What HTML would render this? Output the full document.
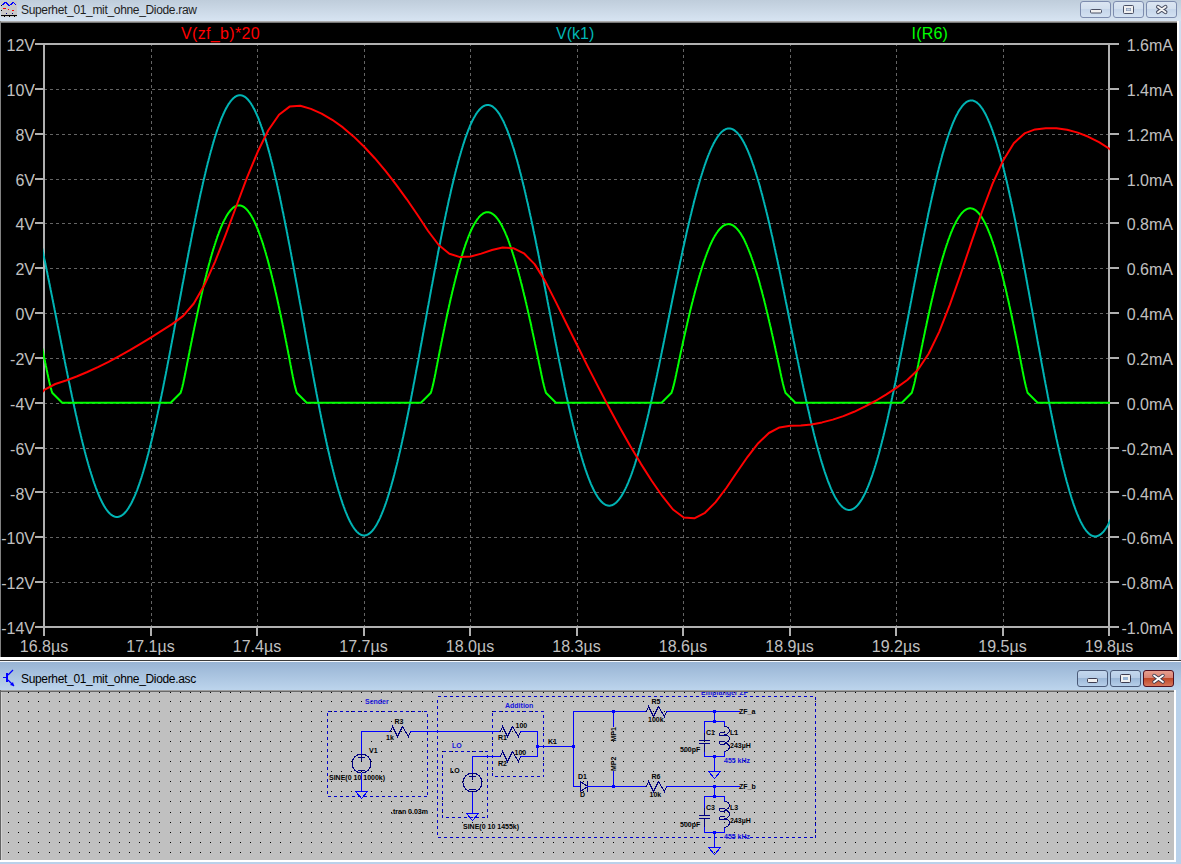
<!DOCTYPE html>
<html><head><meta charset="utf-8">
<style>
html,body{margin:0;padding:0;}
body{width:1181px;height:864px;overflow:hidden;position:relative;background:#b9d1ea;font-family:"Liberation Sans",sans-serif;}
.abs{position:absolute;}
#tb1{left:0;top:0;width:1181px;height:21px;background:linear-gradient(#bfcddb,#d7e4f2);}
#tb2{left:0;top:662px;width:1181px;height:28px;background:linear-gradient(#98b4d4,#bcd4ec);}
.ttl{position:absolute;font-size:12px;color:#000;white-space:nowrap;letter-spacing:-0.33px;}
svg{position:absolute;left:0;top:0;}
</style></head>
<body>
<div class="abs" id="tb1"></div>
<div class="ttl" style="left:21px;top:3px;color:#1e1e1e;">Superhet_01_mit_ohne_Diode.raw</div>
<div class="abs" id="tb2"></div>
<div class="ttl" style="left:21px;top:672px;">Superhet_01_mit_ohne_Diode.asc</div>

<svg width="1181" height="864" viewBox="0 0 1181 864">
<!-- plot window frame -->
<rect x="0" y="21" width="1181" height="640" fill="#d0def0"/>
<rect x="0" y="21" width="1177" height="1" fill="#acacac"/>
<rect x="0" y="22" width="1177" height="1" fill="#787878"/>
<rect x="0" y="21" width="1" height="636" fill="#828282"/>
<rect x="1177" y="21" width="2" height="639" fill="#ffffff"/>
<rect x="1" y="23" width="1176" height="634" fill="#000000"/>
<rect x="0" y="657" width="1179" height="3" fill="#ffffff"/>
<rect x="0" y="660" width="1181" height="1" fill="#3c3c3c"/>
<rect x="0" y="661" width="1181" height="1" fill="#f4f8fc"/>

<!-- plot -->
<g stroke="#646464" stroke-width="1" stroke-dasharray="3 3" shape-rendering="crispEdges">
<line x1="151.5" y1="43" x2="151.5" y2="626" />
<line x1="257.5" y1="43" x2="257.5" y2="626" />
<line x1="364.5" y1="43" x2="364.5" y2="626" />
<line x1="470.5" y1="43" x2="470.5" y2="626" />
<line x1="577.5" y1="43" x2="577.5" y2="626" />
<line x1="683.5" y1="43" x2="683.5" y2="626" />
<line x1="790.5" y1="43" x2="790.5" y2="626" />
<line x1="896.5" y1="43" x2="896.5" y2="626" />
<line x1="1003.5" y1="43" x2="1003.5" y2="626" />
<line x1="44" y1="89.5" x2="1108" y2="89.5" />
<line x1="44" y1="134.5" x2="1108" y2="134.5" />
<line x1="44" y1="179.5" x2="1108" y2="179.5" />
<line x1="44" y1="223.5" x2="1108" y2="223.5" />
<line x1="44" y1="268.5" x2="1108" y2="268.5" />
<line x1="44" y1="313.5" x2="1108" y2="313.5" />
<line x1="44" y1="358.5" x2="1108" y2="358.5" />
<line x1="44" y1="403.5" x2="1108" y2="403.5" />
<line x1="44" y1="448.5" x2="1108" y2="448.5" />
<line x1="44" y1="492.5" x2="1108" y2="492.5" />
<line x1="44" y1="537.5" x2="1108" y2="537.5" />
<line x1="44" y1="582.5" x2="1108" y2="582.5" />
</g>
<g fill="#b0b0b0" shape-rendering="crispEdges">
<rect x="43" y="43" width="1067" height="2"/>
<rect x="43" y="626" width="1067" height="2"/>
<rect x="43" y="43" width="2" height="585"/>
<rect x="1108" y="43" width="2" height="585"/>
<rect x="43" y="628" width="2" height="8"/>
<rect x="150" y="628" width="2" height="8"/>
<rect x="256" y="628" width="2" height="8"/>
<rect x="363" y="628" width="2" height="8"/>
<rect x="469" y="628" width="2" height="8"/>
<rect x="576" y="628" width="2" height="8"/>
<rect x="682" y="628" width="2" height="8"/>
<rect x="789" y="628" width="2" height="8"/>
<rect x="895" y="628" width="2" height="8"/>
<rect x="1002" y="628" width="2" height="8"/>
<rect x="1108" y="628" width="2" height="8"/>
<rect x="35" y="43" width="8" height="2"/>
<rect x="1110" y="43" width="9" height="2"/>
<rect x="35" y="88" width="8" height="2"/>
<rect x="1110" y="88" width="9" height="2"/>
<rect x="35" y="133" width="8" height="2"/>
<rect x="1110" y="133" width="9" height="2"/>
<rect x="35" y="178" width="8" height="2"/>
<rect x="1110" y="178" width="9" height="2"/>
<rect x="35" y="222" width="8" height="2"/>
<rect x="1110" y="222" width="9" height="2"/>
<rect x="35" y="267" width="8" height="2"/>
<rect x="1110" y="267" width="9" height="2"/>
<rect x="35" y="312" width="8" height="2"/>
<rect x="1110" y="312" width="9" height="2"/>
<rect x="35" y="357" width="8" height="2"/>
<rect x="1110" y="357" width="9" height="2"/>
<rect x="35" y="402" width="8" height="2"/>
<rect x="1110" y="402" width="9" height="2"/>
<rect x="35" y="447" width="8" height="2"/>
<rect x="1110" y="447" width="9" height="2"/>
<rect x="35" y="491" width="8" height="2"/>
<rect x="1110" y="491" width="9" height="2"/>
<rect x="35" y="536" width="8" height="2"/>
<rect x="1110" y="536" width="9" height="2"/>
<rect x="35" y="581" width="8" height="2"/>
<rect x="1110" y="581" width="9" height="2"/>
<rect x="35" y="626" width="8" height="2"/>
<rect x="1110" y="626" width="9" height="2"/>
</g>
<g fill="#c0c0c0" font-size="16px" font-family="Liberation Sans">
<text x="35" y="51.0" text-anchor="end">12V</text>
<text x="35" y="95.8" text-anchor="end">10V</text>
<text x="35" y="140.7" text-anchor="end">8V</text>
<text x="35" y="185.5" text-anchor="end">6V</text>
<text x="35" y="230.4" text-anchor="end">4V</text>
<text x="35" y="275.2" text-anchor="end">2V</text>
<text x="35" y="320.1" text-anchor="end">0V</text>
<text x="35" y="364.9" text-anchor="end">-2V</text>
<text x="35" y="409.8" text-anchor="end">-4V</text>
<text x="35" y="454.6" text-anchor="end">-6V</text>
<text x="35" y="499.5" text-anchor="end">-8V</text>
<text x="35" y="544.3" text-anchor="end">-10V</text>
<text x="35" y="589.2" text-anchor="end">-12V</text>
<text x="35" y="634.0" text-anchor="end">-14V</text>
<text x="1173" y="51.0" text-anchor="end">1.6mA</text>
<text x="1173" y="95.8" text-anchor="end">1.4mA</text>
<text x="1173" y="140.7" text-anchor="end">1.2mA</text>
<text x="1173" y="185.5" text-anchor="end">1.0mA</text>
<text x="1173" y="230.4" text-anchor="end">0.8mA</text>
<text x="1173" y="275.2" text-anchor="end">0.6mA</text>
<text x="1173" y="320.1" text-anchor="end">0.4mA</text>
<text x="1173" y="364.9" text-anchor="end">0.2mA</text>
<text x="1173" y="409.8" text-anchor="end">0.0mA</text>
<text x="1173" y="454.6" text-anchor="end">-0.2mA</text>
<text x="1173" y="499.5" text-anchor="end">-0.4mA</text>
<text x="1173" y="544.3" text-anchor="end">-0.6mA</text>
<text x="1173" y="589.2" text-anchor="end">-0.8mA</text>
<text x="1173" y="634.0" text-anchor="end">-1.0mA</text>
<text x="44.0" y="652" text-anchor="middle">16.8µs</text>
<text x="150.5" y="652" text-anchor="middle">17.1µs</text>
<text x="257.0" y="652" text-anchor="middle">17.4µs</text>
<text x="363.5" y="652" text-anchor="middle">17.7µs</text>
<text x="470.0" y="652" text-anchor="middle">18.0µs</text>
<text x="576.5" y="652" text-anchor="middle">18.3µs</text>
<text x="683.0" y="652" text-anchor="middle">18.6µs</text>
<text x="789.5" y="652" text-anchor="middle">18.9µs</text>
<text x="896.0" y="652" text-anchor="middle">19.2µs</text>
<text x="1002.5" y="652" text-anchor="middle">19.5µs</text>
<text x="1109.0" y="652" text-anchor="middle">19.8µs</text>
</g>
<g font-size="16px" font-family="Liberation Sans">
<text x="181" y="39" fill="#ff0000" letter-spacing="0.35">V(zf_b)*20</text>
<text x="556" y="39" fill="#00b4b4">V(k1)</text>
<text x="911.5" y="39" fill="#00ff00" letter-spacing="0.2">I(R6)</text>
</g>
<clipPath id="pc"><rect x="43" y="43" width="1067" height="585"/></clipPath>
<g fill="none" stroke-width="2" stroke-linejoin="round" clip-path="url(#pc)">
<polyline stroke="#00b4b4" points="26.9,184.5 27.3,185.8 27.7,187.1 28.0,188.4 28.4,189.7 28.7,191.1 29.1,192.4 29.4,193.7 29.8,195.1 30.1,196.5 30.5,197.9 30.9,199.3 31.2,200.7 31.6,202.1 31.9,203.5 32.3,204.9 32.6,206.4 33.0,207.8 33.3,209.3 33.7,210.8 34.0,212.3 34.4,213.7 34.8,215.2 35.1,216.8 35.5,218.3 35.8,219.8 36.2,221.3 36.5,222.9 36.9,224.4 37.2,226.0 37.6,227.6 38.0,229.1 38.3,230.7 38.7,232.3 39.0,233.9 39.4,235.5 39.7,237.1 40.1,238.8 40.4,240.4 40.8,242.0 41.1,243.7 41.5,245.3 41.9,247.0 42.2,248.6 42.6,250.3 42.9,252.0 43.3,253.7 43.6,255.3 44.0,257.0 44.3,258.7 44.7,260.4 45.1,262.1 45.4,263.8 45.8,265.6 46.1,267.3 46.5,269.0 46.8,270.7 47.2,272.5 47.5,274.2 47.9,276.0 48.2,277.7 48.6,279.5 49.0,281.2 49.3,283.0 49.7,284.7 50.0,286.5 50.4,288.3 50.7,290.0 51.1,291.8 51.4,293.6 51.8,295.4 52.2,297.2 52.5,299.0 52.9,300.8 53.2,302.5 53.6,304.3 53.9,306.1 54.3,307.9 54.6,309.7 55.0,311.5 55.3,313.3 55.7,315.1 56.1,317.0 56.4,318.8 56.8,320.6 57.1,322.4 57.5,324.2 57.8,326.0 58.2,327.8 58.5,329.6 58.9,331.4 59.3,333.2 59.6,335.0 60.0,336.8 60.3,338.6 60.7,340.4 61.0,342.2 61.4,344.0 61.7,345.8 62.1,347.6 62.4,349.4 62.8,351.2 63.2,353.0 63.5,354.8 63.9,356.6 64.2,358.4 64.6,360.1 64.9,361.9 65.3,363.7 65.6,365.5 66.0,367.2 66.4,369.0 66.7,370.7 67.1,372.5 67.4,374.2 67.8,376.0 68.1,377.7 68.5,379.4 68.8,381.2 69.2,382.9 69.6,384.6 69.9,386.3 70.3,388.0 70.6,389.7 71.0,391.4 71.3,393.1 71.7,394.8 72.0,396.5 72.4,398.1 72.7,399.8 73.1,401.5 73.5,403.1 73.8,404.8 74.2,406.4 74.5,408.0 74.9,409.6 75.2,411.3 75.6,412.9 75.9,414.5 76.3,416.1 76.7,417.6 77.0,419.2 77.4,420.8 77.7,422.3 78.1,423.9 78.4,425.4 78.8,427.0 79.1,428.5 79.5,430.0 79.8,431.5 80.2,433.0 80.6,434.5 80.9,436.0 81.3,437.4 81.6,438.9 82.0,440.3 82.3,441.8 82.7,443.2 83.0,444.6 83.4,446.0 83.8,447.4 84.1,448.8 84.5,450.1 84.8,451.5 85.2,452.9 85.5,454.2 85.9,455.5 86.2,456.8 86.6,458.1 86.9,459.4 87.3,460.7 87.7,462.0 88.0,463.2 88.4,464.5 88.7,465.7 89.1,466.9 89.4,468.1 89.8,469.3 90.1,470.5 90.5,471.7 90.9,472.8 91.2,474.0 91.6,475.1 91.9,476.2 92.3,477.3 92.6,478.4 93.0,479.5 93.3,480.6 93.7,481.6 94.0,482.6 94.4,483.7 94.8,484.7 95.1,485.7 95.5,486.7 95.8,487.6 96.2,488.6 96.5,489.5 96.9,490.4 97.2,491.3 97.6,492.2 98.0,493.1 98.3,494.0 98.7,494.8 99.0,495.7 99.4,496.5 99.7,497.3 100.1,498.1 100.4,498.8 100.8,499.6 101.1,500.3 101.5,501.1 101.9,501.8 102.2,502.5 102.6,503.1 102.9,503.8 103.3,504.5 103.6,505.1 104.0,505.7 104.3,506.3 104.7,506.9 105.1,507.5 105.4,508.0 105.8,508.6 106.1,509.1 106.5,509.6 106.8,510.1 107.2,510.5 107.5,511.0 107.9,511.4 108.2,511.9 108.6,512.3 109.0,512.7 109.3,513.0 109.7,513.4 110.0,513.7 110.4,514.0 110.7,514.4 111.1,514.6 111.4,514.9 111.8,515.2 112.2,515.4 112.5,515.6 112.9,515.8 113.2,516.0 113.6,516.2 113.9,516.4 114.3,516.5 114.6,516.6 115.0,516.7 115.3,516.8 115.7,516.9 116.1,516.9 116.4,517.0 116.8,517.0 117.1,517.0 117.5,517.0 117.8,516.9 118.2,516.9 118.5,516.8 118.9,516.7 119.3,516.6 119.6,516.5 120.0,516.4 120.3,516.2 120.7,516.1 121.0,515.9 121.4,515.7 121.7,515.4 122.1,515.2 122.4,515.0 122.8,514.7 123.2,514.4 123.5,514.1 123.9,513.8 124.2,513.4 124.6,513.1 124.9,512.7 125.3,512.3 125.6,511.9 126.0,511.5 126.4,511.0 126.7,510.6 127.1,510.1 127.4,509.6 127.8,509.1 128.1,508.6 128.5,508.1 128.8,507.5 129.2,506.9 129.5,506.3 129.9,505.7 130.3,505.1 130.6,504.5 131.0,503.8 131.3,503.2 131.7,502.5 132.0,501.8 132.4,501.0 132.7,500.3 133.1,499.6 133.4,498.8 133.8,498.0 134.2,497.2 134.5,496.4 134.9,495.6 135.2,494.7 135.6,493.9 135.9,493.0 136.3,492.1 136.6,491.2 137.0,490.3 137.4,489.3 137.7,488.4 138.1,487.4 138.4,486.4 138.8,485.5 139.1,484.4 139.5,483.4 139.8,482.4 140.2,481.3 140.5,480.3 140.9,479.2 141.3,478.1 141.6,477.0 142.0,475.8 142.3,474.7 142.7,473.5 143.0,472.4 143.4,471.2 143.7,470.0 144.1,468.8 144.5,467.6 144.8,466.3 145.2,465.1 145.5,463.8 145.9,462.6 146.2,461.3 146.6,460.0 146.9,458.7 147.3,457.3 147.6,456.0 148.0,454.7 148.4,453.3 148.7,451.9 149.1,450.5 149.4,449.1 149.8,447.7 150.1,446.3 150.5,444.9 150.8,443.4 151.2,442.0 151.6,440.5 151.9,439.0 152.3,437.5 152.6,436.0 153.0,434.5 153.3,433.0 153.7,431.5 154.0,429.9 154.4,428.4 154.7,426.8 155.1,425.2 155.5,423.7 155.8,422.1 156.2,420.5 156.5,418.8 156.9,417.2 157.2,415.6 157.6,414.0 157.9,412.3 158.3,410.6 158.7,409.0 159.0,407.3 159.4,405.6 159.7,403.9 160.1,402.2 160.4,400.5 160.8,398.8 161.1,397.1 161.5,395.4 161.8,393.6 162.2,391.9 162.6,390.1 162.9,388.4 163.3,386.6 163.6,384.8 164.0,383.0 164.3,381.2 164.7,379.5 165.0,377.7 165.4,375.9 165.8,374.0 166.1,372.2 166.5,370.4 166.8,368.6 167.2,366.7 167.5,364.9 167.9,363.1 168.2,361.2 168.6,359.4 168.9,357.5 169.3,355.6 169.7,353.8 170.0,351.9 170.4,350.0 170.7,348.1 171.1,346.3 171.4,344.4 171.8,342.5 172.1,340.6 172.5,338.7 172.9,336.8 173.2,334.9 173.6,333.0 173.9,331.1 174.3,329.2 174.6,327.3 175.0,325.4 175.3,323.5 175.7,321.6 176.1,319.6 176.4,317.7 176.8,315.8 177.1,313.9 177.5,312.0 177.8,310.1 178.2,308.2 178.5,306.2 178.9,304.3 179.2,302.4 179.6,300.5 180.0,298.6 180.3,296.7 180.7,294.8 181.0,292.9 181.4,291.0 181.7,289.0 182.1,287.1 182.4,285.2 182.8,283.3 183.2,281.4 183.5,279.6 183.9,277.7 184.2,275.8 184.6,273.9 184.9,272.0 185.3,270.1 185.6,268.2 186.0,266.4 186.3,264.5 186.7,262.6 187.1,260.8 187.4,258.9 187.8,257.0 188.1,255.2 188.5,253.3 188.8,251.5 189.2,249.7 189.5,247.8 189.9,246.0 190.3,244.2 190.6,242.3 191.0,240.5 191.3,238.7 191.7,236.9 192.0,235.1 192.4,233.3 192.7,231.5 193.1,229.7 193.4,228.0 193.8,226.2 194.2,224.4 194.5,222.7 194.9,220.9 195.2,219.2 195.6,217.4 195.9,215.7 196.3,214.0 196.6,212.3 197.0,210.6 197.4,208.9 197.7,207.2 198.1,205.5 198.4,203.8 198.8,202.1 199.1,200.5 199.5,198.8 199.8,197.2 200.2,195.6 200.5,193.9 200.9,192.3 201.3,190.7 201.6,189.1 202.0,187.5 202.3,186.0 202.7,184.4 203.0,182.8 203.4,181.3 203.7,179.7 204.1,178.2 204.5,176.7 204.8,175.2 205.2,173.7 205.5,172.2 205.9,170.8 206.2,169.3 206.6,167.8 206.9,166.4 207.3,165.0 207.6,163.6 208.0,162.1 208.4,160.8 208.7,159.4 209.1,158.0 209.4,156.7 209.8,155.3 210.1,154.0 210.5,152.7 210.8,151.3 211.2,150.1 211.6,148.8 211.9,147.5 212.3,146.2 212.6,145.0 213.0,143.8 213.3,142.6 213.7,141.4 214.0,140.2 214.4,139.0 214.7,137.8 215.1,136.7 215.5,135.5 215.8,134.4 216.2,133.3 216.5,132.2 216.9,131.2 217.2,130.1 217.6,129.0 217.9,128.0 218.3,127.0 218.7,126.0 219.0,125.0 219.4,124.0 219.7,123.1 220.1,122.1 220.4,121.2 220.8,120.3 221.1,119.4 221.5,118.5 221.8,117.6 222.2,116.8 222.6,115.9 222.9,115.1 223.3,114.3 223.6,113.5 224.0,112.7 224.3,112.0 224.7,111.2 225.0,110.5 225.4,109.8 225.8,109.1 226.1,108.4 226.5,107.8 226.8,107.1 227.2,106.5 227.5,105.9 227.9,105.3 228.2,104.7 228.6,104.2 228.9,103.6 229.3,103.1 229.7,102.6 230.0,102.1 230.4,101.6 230.7,101.1 231.1,100.7 231.4,100.3 231.8,99.9 232.1,99.5 232.5,99.1 232.9,98.7 233.2,98.4 233.6,98.1 233.9,97.8 234.3,97.5 234.6,97.2 235.0,97.0 235.3,96.7 235.7,96.5 236.0,96.3 236.4,96.1 236.8,95.9 237.1,95.8 237.5,95.7 237.8,95.5 238.2,95.4 238.5,95.4 238.9,95.3 239.2,95.3 239.6,95.2 240.0,95.2 240.3,95.2 240.7,95.3 241.0,95.3 241.4,95.4 241.7,95.4 242.1,95.5 242.4,95.6 242.8,95.8 243.1,95.9 243.5,96.1 243.9,96.3 244.2,96.5 244.6,96.7 244.9,96.9 245.3,97.2 245.6,97.4 246.0,97.7 246.3,98.0 246.7,98.4 247.1,98.7 247.4,99.1 247.8,99.4 248.1,99.8 248.5,100.2 248.8,100.7 249.2,101.1 249.5,101.6 249.9,102.0 250.2,102.5 250.6,103.0 251.0,103.6 251.3,104.1 251.7,104.7 252.0,105.2 252.4,105.8 252.7,106.5 253.1,107.1 253.4,107.7 253.8,108.4 254.1,109.1 254.5,109.8 254.9,110.5 255.2,111.2 255.6,112.0 255.9,112.7 256.3,113.5 256.6,114.3 257.0,115.1 257.3,115.9 257.7,116.8 258.1,117.6 258.4,118.5 258.8,119.4 259.1,120.3 259.5,121.2 259.8,122.1 260.2,123.1 260.5,124.1 260.9,125.0 261.2,126.0 261.6,127.1 262.0,128.1 262.3,129.1 262.7,130.2 263.0,131.3 263.4,132.3 263.7,133.4 264.1,134.6 264.4,135.7 264.8,136.8 265.2,138.0 265.5,139.2 265.9,140.4 266.2,141.6 266.6,142.8 266.9,144.0 267.3,145.2 267.6,146.5 268.0,147.8 268.3,149.1 268.7,150.4 269.1,151.7 269.4,153.0 269.8,154.3 270.1,155.7 270.5,157.0 270.8,158.4 271.2,159.8 271.5,161.2 271.9,162.6 272.3,164.0 272.6,165.5 273.0,166.9 273.3,168.4 273.7,169.9 274.0,171.4 274.4,172.8 274.7,174.4 275.1,175.9 275.4,177.4 275.8,178.9 276.2,180.5 276.5,182.1 276.9,183.6 277.2,185.2 277.6,186.8 277.9,188.4 278.3,190.0 278.6,191.7 279.0,193.3 279.4,194.9 279.7,196.6 280.1,198.3 280.4,199.9 280.8,201.6 281.1,203.3 281.5,205.0 281.8,206.7 282.2,208.4 282.5,210.2 282.9,211.9 283.3,213.6 283.6,215.4 284.0,217.2 284.3,218.9 284.7,220.7 285.0,222.5 285.4,224.3 285.7,226.1 286.1,227.9 286.5,229.7 286.8,231.5 287.2,233.3 287.5,235.2 287.9,237.0 288.2,238.9 288.6,240.7 288.9,242.6 289.3,244.4 289.7,246.3 290.0,248.2 290.4,250.1 290.7,251.9 291.1,253.8 291.4,255.7 291.8,257.6 292.1,259.5 292.5,261.4 292.8,263.3 293.2,265.3 293.6,267.2 293.9,269.1 294.3,271.0 294.6,273.0 295.0,274.9 295.3,276.9 295.7,278.8 296.0,280.8 296.4,282.7 296.8,284.7 297.1,286.6 297.5,288.6 297.8,290.6 298.2,292.5 298.5,294.5 298.9,296.5 299.2,298.4 299.6,300.4 299.9,302.4 300.3,304.4 300.7,306.4 301.0,308.3 301.4,310.3 301.7,312.3 302.1,314.3 302.4,316.3 302.8,318.3 303.1,320.3 303.5,322.2 303.9,324.2 304.2,326.2 304.6,328.2 304.9,330.2 305.3,332.2 305.6,334.1 306.0,336.1 306.3,338.1 306.7,340.1 307.0,342.0 307.4,344.0 307.8,346.0 308.1,347.9 308.5,349.9 308.8,351.9 309.2,353.8 309.5,355.8 309.9,357.7 310.2,359.7 310.6,361.6 310.9,363.6 311.3,365.5 311.7,367.4 312.0,369.4 312.4,371.3 312.7,373.2 313.1,375.1 313.4,377.0 313.8,378.9 314.1,380.8 314.5,382.7 314.9,384.6 315.2,386.5 315.6,388.4 315.9,390.2 316.3,392.1 316.6,394.0 317.0,395.8 317.3,397.6 317.7,399.5 318.0,401.3 318.4,403.1 318.8,405.0 319.1,406.8 319.5,408.6 319.8,410.4 320.2,412.2 320.5,413.9 320.9,415.7 321.2,417.5 321.6,419.2 322.0,421.0 322.3,422.7 322.7,424.4 323.0,426.1 323.4,427.9 323.7,429.6 324.1,431.2 324.4,432.9 324.8,434.6 325.2,436.3 325.5,437.9 325.9,439.6 326.2,441.2 326.6,442.8 326.9,444.4 327.3,446.0 327.6,447.6 328.0,449.2 328.3,450.8 328.7,452.3 329.1,453.9 329.4,455.4 329.8,456.9 330.1,458.5 330.5,460.0 330.8,461.4 331.2,462.9 331.5,464.4 331.9,465.8 332.3,467.3 332.6,468.7 333.0,470.1 333.3,471.5 333.7,472.9 334.0,474.3 334.4,475.7 334.7,477.0 335.1,478.4 335.4,479.7 335.8,481.0 336.2,482.3 336.5,483.6 336.9,484.9 337.2,486.1 337.6,487.4 337.9,488.6 338.3,489.8 338.6,491.0 339.0,492.2 339.4,493.4 339.7,494.5 340.1,495.7 340.4,496.8 340.8,497.9 341.1,499.0 341.5,500.1 341.8,501.2 342.2,502.2 342.5,503.3 342.9,504.3 343.3,505.3 343.6,506.3 344.0,507.3 344.3,508.2 344.7,509.2 345.0,510.1 345.4,511.0 345.7,511.9 346.1,512.8 346.5,513.7 346.8,514.5 347.2,515.4 347.5,516.2 347.9,517.0 348.2,517.8 348.6,518.6 348.9,519.3 349.3,520.0 349.6,520.8 350.0,521.5 350.4,522.2 350.7,522.8 351.1,523.5 351.4,524.1 351.8,524.7 352.1,525.3 352.5,525.9 352.8,526.5 353.2,527.0 353.6,527.6 353.9,528.1 354.3,528.6 354.6,529.1 355.0,529.5 355.3,530.0 355.7,530.4 356.0,530.8 356.4,531.2 356.7,531.6 357.1,532.0 357.5,532.3 357.8,532.6 358.2,532.9 358.5,533.2 358.9,533.5 359.2,533.8 359.6,534.0 359.9,534.2 360.3,534.4 360.7,534.6 361.0,534.8 361.4,534.9 361.7,535.1 362.1,535.2 362.4,535.3 362.8,535.3 363.1,535.4 363.5,535.4 363.8,535.5 364.2,535.5 364.6,535.5 364.9,535.4 365.3,535.4 365.6,535.3 366.0,535.2 366.3,535.1 366.7,535.0 367.0,534.9 367.4,534.7 367.8,534.6 368.1,534.4 368.5,534.2 368.8,533.9 369.2,533.7 369.5,533.4 369.9,533.2 370.2,532.9 370.6,532.5 370.9,532.2 371.3,531.9 371.7,531.5 372.0,531.1 372.4,530.7 372.7,530.3 373.1,529.9 373.4,529.4 373.8,528.9 374.1,528.5 374.5,528.0 374.8,527.4 375.2,526.9 375.6,526.3 375.9,525.8 376.3,525.2 376.6,524.6 377.0,523.9 377.3,523.3 377.7,522.7 378.0,522.0 378.4,521.3 378.8,520.6 379.1,519.9 379.5,519.1 379.8,518.4 380.2,517.6 380.5,516.8 380.9,516.0 381.2,515.2 381.6,514.3 381.9,513.5 382.3,512.6 382.7,511.7 383.0,510.8 383.4,509.9 383.7,509.0 384.1,508.0 384.4,507.1 384.8,506.1 385.1,505.1 385.5,504.1 385.9,503.1 386.2,502.0 386.6,501.0 386.9,499.9 387.3,498.8 387.6,497.7 388.0,496.6 388.3,495.5 388.7,494.4 389.0,493.2 389.4,492.0 389.8,490.8 390.1,489.6 390.5,488.4 390.8,487.2 391.2,486.0 391.5,484.7 391.9,483.4 392.2,482.2 392.6,480.9 393.0,479.6 393.3,478.2 393.7,476.9 394.0,475.6 394.4,474.2 394.7,472.8 395.1,471.4 395.4,470.0 395.8,468.6 396.1,467.2 396.5,465.8 396.9,464.3 397.2,462.9 397.6,461.4 397.9,459.9 398.3,458.4 398.6,456.9 399.0,455.4 399.3,453.9 399.7,452.4 400.1,450.8 400.4,449.3 400.8,447.7 401.1,446.1 401.5,444.5 401.8,442.9 402.2,441.3 402.5,439.7 402.9,438.1 403.3,436.4 403.6,434.8 404.0,433.1 404.3,431.4 404.7,429.8 405.0,428.1 405.4,426.4 405.7,424.7 406.1,423.0 406.4,421.3 406.8,419.5 407.2,417.8 407.5,416.0 407.9,414.3 408.2,412.5 408.6,410.8 408.9,409.0 409.3,407.2 409.6,405.4 410.0,403.6 410.4,401.8 410.7,400.0 411.1,398.2 411.4,396.4 411.8,394.5 412.1,392.7 412.5,390.9 412.8,389.0 413.2,387.2 413.5,385.3 413.9,383.4 414.3,381.6 414.6,379.7 415.0,377.8 415.3,375.9 415.7,374.0 416.0,372.2 416.4,370.3 416.7,368.4 417.1,366.5 417.5,364.5 417.8,362.6 418.2,360.7 418.5,358.8 418.9,356.9 419.2,354.9 419.6,353.0 419.9,351.1 420.3,349.2 420.6,347.2 421.0,345.3 421.4,343.3 421.7,341.4 422.1,339.5 422.4,337.5 422.8,335.6 423.1,333.6 423.5,331.7 423.8,329.7 424.2,327.8 424.6,325.8 424.9,323.9 425.3,321.9 425.6,320.0 426.0,318.0 426.3,316.1 426.7,314.1 427.0,312.2 427.4,310.2 427.7,308.3 428.1,306.3 428.5,304.4 428.8,302.5 429.2,300.5 429.5,298.6 429.9,296.6 430.2,294.7 430.6,292.8 430.9,290.9 431.3,288.9 431.6,287.0 432.0,285.1 432.4,283.2 432.7,281.3 433.1,279.4 433.4,277.5 433.8,275.6 434.1,273.7 434.5,271.8 434.8,269.9 435.2,268.0 435.6,266.2 435.9,264.3 436.3,262.4 436.6,260.6 437.0,258.7 437.3,256.9 437.7,255.0 438.0,253.2 438.4,251.3 438.7,249.5 439.1,247.7 439.5,245.9 439.8,244.0 440.2,242.2 440.5,240.4 440.9,238.6 441.2,236.9 441.6,235.1 441.9,233.3 442.3,231.5 442.7,229.8 443.0,228.0 443.4,226.3 443.7,224.5 444.1,222.8 444.4,221.1 444.8,219.4 445.1,217.7 445.5,216.0 445.8,214.3 446.2,212.6 446.6,211.0 446.9,209.3 447.3,207.6 447.6,206.0 448.0,204.4 448.3,202.7 448.7,201.1 449.0,199.5 449.4,197.9 449.8,196.3 450.1,194.8 450.5,193.2 450.8,191.6 451.2,190.1 451.5,188.6 451.9,187.0 452.2,185.5 452.6,184.0 453.0,182.5 453.3,181.0 453.7,179.6 454.0,178.1 454.4,176.7 454.7,175.2 455.1,173.8 455.4,172.4 455.8,171.0 456.1,169.6 456.5,168.3 456.9,166.9 457.2,165.5 457.6,164.2 457.9,162.9 458.3,161.6 458.6,160.3 459.0,159.0 459.3,157.7 459.7,156.4 460.1,155.2 460.4,154.0 460.8,152.7 461.1,151.5 461.5,150.3 461.8,149.2 462.2,148.0 462.5,146.9 462.9,145.7 463.2,144.6 463.6,143.5 464.0,142.4 464.3,141.3 464.7,140.2 465.0,139.2 465.4,138.2 465.7,137.1 466.1,136.1 466.4,135.1 466.8,134.2 467.2,133.2 467.5,132.2 467.9,131.3 468.2,130.4 468.6,129.5 468.9,128.6 469.3,127.7 469.6,126.9 470.0,126.0 470.3,125.2 470.7,124.4 471.1,123.6 471.4,122.8 471.8,122.1 472.1,121.3 472.5,120.6 472.8,119.9 473.2,119.2 473.5,118.5 473.9,117.8 474.3,117.2 474.6,116.6 475.0,116.0 475.3,115.4 475.7,114.8 476.0,114.2 476.4,113.7 476.7,113.1 477.1,112.6 477.4,112.1 477.8,111.6 478.2,111.2 478.5,110.7 478.9,110.3 479.2,109.9 479.6,109.5 479.9,109.1 480.3,108.7 480.6,108.4 481.0,108.0 481.4,107.7 481.7,107.4 482.1,107.1 482.4,106.9 482.8,106.6 483.1,106.4 483.5,106.2 483.8,106.0 484.2,105.8 484.5,105.6 484.9,105.5 485.3,105.4 485.6,105.3 486.0,105.2 486.3,105.1 486.7,105.0 487.0,105.0 487.4,105.0 487.7,105.0 488.1,105.0 488.5,105.0 488.8,105.0 489.2,105.1 489.5,105.2 489.9,105.3 490.2,105.4 490.6,105.5 490.9,105.7 491.3,105.8 491.6,106.0 492.0,106.2 492.4,106.4 492.7,106.7 493.1,106.9 493.4,107.2 493.8,107.5 494.1,107.8 494.5,108.1 494.8,108.4 495.2,108.8 495.5,109.1 495.9,109.5 496.3,109.9 496.6,110.3 497.0,110.8 497.3,111.2 497.7,111.7 498.0,112.2 498.4,112.7 498.7,113.2 499.1,113.7 499.5,114.2 499.8,114.8 500.2,115.4 500.5,116.0 500.9,116.6 501.2,117.2 501.6,117.9 501.9,118.5 502.3,119.2 502.6,119.9 503.0,120.6 503.4,121.3 503.7,122.1 504.1,122.8 504.4,123.6 504.8,124.4 505.1,125.2 505.5,126.0 505.8,126.8 506.2,127.7 506.6,128.5 506.9,129.4 507.3,130.3 507.6,131.2 508.0,132.1 508.3,133.1 508.7,134.0 509.0,135.0 509.4,135.9 509.7,136.9 510.1,137.9 510.5,139.0 510.8,140.0 511.2,141.1 511.5,142.1 511.9,143.2 512.2,144.3 512.6,145.4 512.9,146.5 513.3,147.6 513.7,148.8 514.0,149.9 514.4,151.1 514.7,152.3 515.1,153.5 515.4,154.7 515.8,155.9 516.1,157.1 516.5,158.4 516.9,159.6 517.2,160.9 517.6,162.2 517.9,163.5 518.3,164.8 518.6,166.1 519.0,167.4 519.3,168.8 519.7,170.1 520.0,171.5 520.4,172.9 520.8,174.3 521.1,175.7 521.5,177.1 521.8,178.5 522.2,179.9 522.5,181.4 522.9,182.8 523.2,184.3 523.6,185.7 524.0,187.2 524.3,188.7 524.7,190.2 525.0,191.7 525.4,193.2 525.7,194.8 526.1,196.3 526.4,197.9 526.8,199.4 527.1,201.0 527.5,202.5 527.9,204.1 528.2,205.7 528.6,207.3 528.9,208.9 529.3,210.5 529.6,212.2 530.0,213.8 530.3,215.4 530.7,217.1 531.1,218.7 531.4,220.4 531.8,222.1 532.1,223.7 532.5,225.4 532.8,227.1 533.2,228.8 533.5,230.5 533.9,232.2 534.2,233.9 534.6,235.6 535.0,237.3 535.3,239.1 535.7,240.8 536.0,242.5 536.4,244.3 536.7,246.0 537.1,247.8 537.4,249.6 537.8,251.3 538.2,253.1 538.5,254.9 538.9,256.6 539.2,258.4 539.6,260.2 539.9,262.0 540.3,263.8 540.6,265.6 541.0,267.4 541.3,269.2 541.7,271.0 542.1,272.8 542.4,274.6 542.8,276.4 543.1,278.2 543.5,280.1 543.8,281.9 544.2,283.7 544.5,285.5 544.9,287.3 545.3,289.2 545.6,291.0 546.0,292.8 546.3,294.7 546.7,296.5 547.0,298.4 547.4,300.2 547.7,302.0 548.1,303.9 548.4,305.7 548.8,307.5 549.2,309.4 549.5,311.2 549.9,313.1 550.2,314.9 550.6,316.7 550.9,318.6 551.3,320.4 551.6,322.3 552.0,324.1 552.3,325.9 552.7,327.8 553.1,329.6 553.4,331.4 553.8,333.3 554.1,335.1 554.5,336.9 554.8,338.7 555.2,340.5 555.5,342.3 555.9,344.2 556.3,346.0 556.6,347.8 557.0,349.6 557.3,351.4 557.7,353.2 558.0,354.9 558.4,356.7 558.7,358.5 559.1,360.3 559.4,362.0 559.8,363.8 560.2,365.6 560.5,367.3 560.9,369.1 561.2,370.8 561.6,372.5 561.9,374.3 562.3,376.0 562.6,377.7 563.0,379.4 563.4,381.1 563.7,382.8 564.1,384.5 564.4,386.2 564.8,387.9 565.1,389.6 565.5,391.2 565.8,392.9 566.2,394.6 566.5,396.2 566.9,397.8 567.3,399.5 567.6,401.1 568.0,402.7 568.3,404.3 568.7,405.9 569.0,407.5 569.4,409.0 569.7,410.6 570.1,412.2 570.5,413.7 570.8,415.3 571.2,416.8 571.5,418.3 571.9,419.8 572.2,421.3 572.6,422.8 572.9,424.3 573.3,425.8 573.7,427.3 574.0,428.7 574.4,430.1 574.7,431.6 575.1,433.0 575.4,434.4 575.8,435.8 576.1,437.2 576.5,438.6 576.8,439.9 577.2,441.3 577.6,442.6 577.9,444.0 578.3,445.3 578.6,446.6 579.0,447.9 579.3,449.2 579.7,450.4 580.0,451.7 580.4,452.9 580.8,454.2 581.1,455.4 581.5,456.6 581.8,457.8 582.2,459.0 582.5,460.2 582.9,461.3 583.2,462.5 583.6,463.6 583.9,464.7 584.3,465.8 584.7,466.9 585.0,468.0 585.4,469.1 585.7,470.1 586.1,471.1 586.4,472.2 586.8,473.2 587.1,474.2 587.5,475.1 587.9,476.1 588.2,477.1 588.6,478.0 588.9,478.9 589.3,479.8 589.6,480.7 590.0,481.6 590.3,482.5 590.7,483.3 591.0,484.1 591.4,485.0 591.8,485.8 592.1,486.6 592.5,487.3 592.8,488.1 593.2,488.8 593.5,489.6 593.9,490.3 594.2,491.0 594.6,491.6 595.0,492.3 595.3,493.0 595.7,493.6 596.0,494.2 596.4,494.8 596.7,495.4 597.1,496.0 597.4,496.5 597.8,497.1 598.1,497.6 598.5,498.1 598.9,498.6 599.2,499.1 599.6,499.5 599.9,500.0 600.3,500.4 600.6,500.8 601.0,501.2 601.3,501.6 601.7,501.9 602.1,502.3 602.4,502.6 602.8,502.9 603.1,503.2 603.5,503.5 603.8,503.7 604.2,504.0 604.5,504.2 604.9,504.4 605.2,504.6 605.6,504.8 606.0,505.0 606.3,505.1 606.7,505.2 607.0,505.4 607.4,505.5 607.7,505.5 608.1,505.6 608.4,505.6 608.8,505.7 609.1,505.7 609.5,505.7 609.9,505.7 610.2,505.6 610.6,505.6 610.9,505.5 611.3,505.4 611.6,505.3 612.0,505.2 612.3,505.1 612.7,504.9 613.1,504.7 613.4,504.5 613.8,504.3 614.1,504.1 614.5,503.9 614.8,503.6 615.2,503.4 615.5,503.1 615.9,502.8 616.2,502.5 616.6,502.1 617.0,501.8 617.3,501.4 617.7,501.0 618.0,500.6 618.4,500.2 618.7,499.8 619.1,499.3 619.4,498.9 619.8,498.4 620.2,497.9 620.5,497.4 620.9,496.9 621.2,496.3 621.6,495.8 621.9,495.2 622.3,494.6 622.6,494.0 623.0,493.4 623.3,492.8 623.7,492.1 624.1,491.4 624.4,490.8 624.8,490.1 625.1,489.4 625.5,488.6 625.8,487.9 626.2,487.1 626.5,486.4 626.9,485.6 627.3,484.8 627.6,484.0 628.0,483.1 628.3,482.3 628.7,481.4 629.0,480.6 629.4,479.7 629.7,478.8 630.1,477.9 630.5,476.9 630.8,476.0 631.2,475.0 631.5,474.1 631.9,473.1 632.2,472.1 632.6,471.1 632.9,470.0 633.3,469.0 633.6,467.9 634.0,466.9 634.4,465.8 634.7,464.7 635.1,463.6 635.4,462.5 635.8,461.4 636.1,460.2 636.5,459.1 636.8,457.9 637.2,456.7 637.6,455.5 637.9,454.3 638.3,453.1 638.6,451.9 639.0,450.6 639.3,449.4 639.7,448.1 640.0,446.9 640.4,445.6 640.7,444.3 641.1,443.0 641.5,441.7 641.8,440.3 642.2,439.0 642.5,437.6 642.9,436.3 643.2,434.9 643.6,433.5 643.9,432.1 644.3,430.7 644.7,429.3 645.0,427.9 645.4,426.5 645.7,425.0 646.1,423.6 646.4,422.1 646.8,420.7 647.1,419.2 647.5,417.7 647.8,416.2 648.2,414.7 648.6,413.2 648.9,411.7 649.3,410.1 649.6,408.6 650.0,407.1 650.3,405.5 650.7,403.9 651.0,402.4 651.4,400.8 651.8,399.2 652.1,397.6 652.5,396.0 652.8,394.4 653.2,392.8 653.5,391.2 653.9,389.6 654.2,387.9 654.6,386.3 654.9,384.7 655.3,383.0 655.7,381.4 656.0,379.7 656.4,378.0 656.7,376.4 657.1,374.7 657.4,373.0 657.8,371.3 658.1,369.7 658.5,368.0 658.9,366.3 659.2,364.6 659.6,362.8 659.9,361.1 660.3,359.4 660.6,357.7 661.0,356.0 661.3,354.3 661.7,352.5 662.0,350.8 662.4,349.1 662.8,347.3 663.1,345.6 663.5,343.8 663.8,342.1 664.2,340.4 664.5,338.6 664.9,336.9 665.2,335.1 665.6,333.3 666.0,331.6 666.3,329.8 666.7,328.1 667.0,326.3 667.4,324.6 667.7,322.8 668.1,321.1 668.4,319.3 668.8,317.5 669.1,315.8 669.5,314.0 669.9,312.3 670.2,310.5 670.6,308.8 670.9,307.0 671.3,305.3 671.6,303.5 672.0,301.8 672.3,300.0 672.7,298.3 673.0,296.5 673.4,294.8 673.8,293.1 674.1,291.3 674.5,289.6 674.8,287.9 675.2,286.1 675.5,284.4 675.9,282.7 676.2,281.0 676.6,279.3 677.0,277.6 677.3,275.9 677.7,274.2 678.0,272.5 678.4,270.8 678.7,269.1 679.1,267.4 679.4,265.7 679.8,264.0 680.1,262.3 680.5,260.7 680.9,259.0 681.2,257.4 681.6,255.7 681.9,254.0 682.3,252.4 682.6,250.8 683.0,249.1 683.3,247.5 683.7,245.9 684.1,244.3 684.4,242.7 684.8,241.1 685.1,239.5 685.5,237.9 685.8,236.3 686.2,234.7 686.5,233.1 686.9,231.6 687.2,230.0 687.6,228.5 688.0,226.9 688.3,225.4 688.7,223.9 689.0,222.4 689.4,220.9 689.7,219.4 690.1,217.9 690.4,216.4 690.8,214.9 691.2,213.5 691.5,212.0 691.9,210.6 692.2,209.1 692.6,207.7 692.9,206.3 693.3,204.9 693.6,203.5 694.0,202.1 694.3,200.7 694.7,199.3 695.1,198.0 695.4,196.6 695.8,195.3 696.1,193.9 696.5,192.6 696.8,191.3 697.2,190.0 697.5,188.7 697.9,187.5 698.3,186.2 698.6,184.9 699.0,183.7 699.3,182.5 699.7,181.2 700.0,180.0 700.4,178.8 700.7,177.7 701.1,176.5 701.5,175.3 701.8,174.2 702.2,173.0 702.5,171.9 702.9,170.8 703.2,169.7 703.6,168.6 703.9,167.6 704.3,166.5 704.6,165.5 705.0,164.4 705.4,163.4 705.7,162.4 706.1,161.4 706.4,160.4 706.8,159.5 707.1,158.5 707.5,157.6 707.8,156.6 708.2,155.7 708.6,154.8 708.9,153.9 709.3,153.1 709.6,152.2 710.0,151.4 710.3,150.5 710.7,149.7 711.0,148.9 711.4,148.1 711.7,147.4 712.1,146.6 712.5,145.9 712.8,145.2 713.2,144.4 713.5,143.7 713.9,143.1 714.2,142.4 714.6,141.7 714.9,141.1 715.3,140.5 715.7,139.9 716.0,139.3 716.4,138.7 716.7,138.1 717.1,137.6 717.4,137.1 717.8,136.6 718.1,136.1 718.5,135.6 718.8,135.1 719.2,134.7 719.6,134.2 719.9,133.8 720.3,133.4 720.6,133.0 721.0,132.6 721.3,132.3 721.7,131.9 722.0,131.6 722.4,131.3 722.8,131.0 723.1,130.7 723.5,130.5 723.8,130.2 724.2,130.0 724.5,129.8 724.9,129.6 725.2,129.4 725.6,129.2 725.9,129.1 726.3,128.9 726.7,128.8 727.0,128.7 727.4,128.6 727.7,128.6 728.1,128.5 728.4,128.5 728.8,128.5 729.1,128.5 729.5,128.5 729.9,128.5 730.2,128.6 730.6,128.6 730.9,128.7 731.3,128.8 731.6,128.9 732.0,129.0 732.3,129.2 732.7,129.3 733.0,129.5 733.4,129.7 733.8,129.9 734.1,130.1 734.5,130.4 734.8,130.6 735.2,130.9 735.5,131.2 735.9,131.5 736.2,131.8 736.6,132.1 736.9,132.5 737.3,132.9 737.7,133.2 738.0,133.6 738.4,134.1 738.7,134.5 739.1,134.9 739.4,135.4 739.8,135.9 740.1,136.4 740.5,136.9 740.9,137.4 741.2,137.9 741.6,138.5 741.9,139.1 742.3,139.6 742.6,140.3 743.0,140.9 743.3,141.5 743.7,142.1 744.1,142.8 744.4,143.5 744.8,144.2 745.1,144.9 745.5,145.6 745.8,146.3 746.2,147.1 746.5,147.9 746.9,148.6 747.2,149.4 747.6,150.2 748.0,151.1 748.3,151.9 748.7,152.8 749.0,153.6 749.4,154.5 749.7,155.4 750.1,156.3 750.4,157.2 750.8,158.2 751.2,159.1 751.5,160.1 751.9,161.1 752.2,162.1 752.6,163.1 752.9,164.1 753.3,165.1 753.6,166.2 754.0,167.2 754.3,168.3 754.7,169.4 755.1,170.5 755.4,171.6 755.8,172.7 756.1,173.8 756.5,175.0 756.8,176.1 757.2,177.3 757.5,178.5 757.9,179.7 758.3,180.9 758.6,182.1 759.0,183.3 759.3,184.6 759.7,185.8 760.0,187.1 760.4,188.4 760.7,189.7 761.1,191.0 761.4,192.3 761.8,193.6 762.2,194.9 762.5,196.3 762.9,197.6 763.2,199.0 763.6,200.4 763.9,201.7 764.3,203.1 764.6,204.5 765.0,205.9 765.4,207.4 765.7,208.8 766.1,210.2 766.4,211.7 766.8,213.1 767.1,214.6 767.5,216.1 767.8,217.6 768.2,219.1 768.5,220.6 768.9,222.1 769.3,223.6 769.6,225.1 770.0,226.7 770.3,228.2 770.7,229.8 771.0,231.3 771.4,232.9 771.7,234.5 772.1,236.1 772.5,237.6 772.8,239.2 773.2,240.8 773.5,242.5 773.9,244.1 774.2,245.7 774.6,247.3 774.9,249.0 775.3,250.6 775.6,252.2 776.0,253.9 776.4,255.6 776.7,257.2 777.1,258.9 777.4,260.6 777.8,262.2 778.1,263.9 778.5,265.6 778.8,267.3 779.2,269.0 779.6,270.7 779.9,272.4 780.3,274.1 780.6,275.8 781.0,277.6 781.3,279.3 781.7,281.0 782.0,282.7 782.4,284.5 782.7,286.2 783.1,287.9 783.5,289.7 783.8,291.4 784.2,293.2 784.5,294.9 784.9,296.7 785.2,298.4 785.6,300.2 785.9,301.9 786.3,303.7 786.7,305.5 787.0,307.2 787.4,309.0 787.7,310.8 788.1,312.5 788.4,314.3 788.8,316.1 789.1,317.9 789.5,319.6 789.8,321.4 790.2,323.2 790.6,324.9 790.9,326.7 791.3,328.5 791.6,330.3 792.0,332.0 792.3,333.8 792.7,335.6 793.0,337.4 793.4,339.1 793.7,340.9 794.1,342.7 794.5,344.4 794.8,346.2 795.2,347.9 795.5,349.7 795.9,351.4 796.2,353.2 796.6,354.9 796.9,356.7 797.3,358.4 797.7,360.2 798.0,361.9 798.4,363.6 798.7,365.4 799.1,367.1 799.4,368.8 799.8,370.5 800.1,372.2 800.5,373.9 800.8,375.6 801.2,377.3 801.6,379.0 801.9,380.7 802.3,382.4 802.6,384.0 803.0,385.7 803.3,387.4 803.7,389.0 804.0,390.7 804.4,392.3 804.8,394.0 805.1,395.6 805.5,397.2 805.8,398.8 806.2,400.5 806.5,402.1 806.9,403.7 807.2,405.3 807.6,406.8 807.9,408.4 808.3,410.0 808.7,411.5 809.0,413.1 809.4,414.6 809.7,416.2 810.1,417.7 810.4,419.2 810.8,420.7 811.1,422.2 811.5,423.7 811.9,425.2 812.2,426.7 812.6,428.1 812.9,429.6 813.3,431.0 813.6,432.5 814.0,433.9 814.3,435.3 814.7,436.7 815.0,438.1 815.4,439.5 815.8,440.9 816.1,442.2 816.5,443.6 816.8,444.9 817.2,446.3 817.5,447.6 817.9,448.9 818.2,450.2 818.6,451.5 819.0,452.8 819.3,454.0 819.7,455.3 820.0,456.5 820.4,457.8 820.7,459.0 821.1,460.2 821.4,461.4 821.8,462.6 822.2,463.7 822.5,464.9 822.9,466.0 823.2,467.2 823.6,468.3 823.9,469.4 824.3,470.5 824.6,471.5 825.0,472.6 825.3,473.7 825.7,474.7 826.1,475.7 826.4,476.7 826.8,477.7 827.1,478.7 827.5,479.7 827.8,480.6 828.2,481.6 828.5,482.5 828.9,483.4 829.3,484.3 829.6,485.2 830.0,486.1 830.3,486.9 830.7,487.8 831.0,488.6 831.4,489.4 831.7,490.2 832.1,491.0 832.4,491.8 832.8,492.5 833.2,493.3 833.5,494.0 833.9,494.7 834.2,495.4 834.6,496.1 834.9,496.7 835.3,497.4 835.6,498.0 836.0,498.6 836.4,499.2 836.7,499.8 837.1,500.4 837.4,500.9 837.8,501.4 838.1,502.0 838.5,502.5 838.8,502.9 839.2,503.4 839.5,503.9 839.9,504.3 840.3,504.7 840.6,505.1 841.0,505.5 841.3,505.9 841.7,506.3 842.0,506.6 842.4,506.9 842.7,507.2 843.1,507.5 843.5,507.8 843.8,508.1 844.2,508.3 844.5,508.5 844.9,508.7 845.2,508.9 845.6,509.1 845.9,509.3 846.3,509.4 846.6,509.5 847.0,509.6 847.4,509.7 847.7,509.8 848.1,509.9 848.4,509.9 848.8,509.9 849.1,510.0 849.5,509.9 849.8,509.9 850.2,509.9 850.6,509.8 850.9,509.7 851.3,509.7 851.6,509.5 852.0,509.4 852.3,509.3 852.7,509.1 853.0,508.9 853.4,508.7 853.7,508.5 854.1,508.3 854.5,508.1 854.8,507.8 855.2,507.5 855.5,507.2 855.9,506.9 856.2,506.6 856.6,506.3 856.9,505.9 857.3,505.5 857.7,505.1 858.0,504.7 858.4,504.3 858.7,503.9 859.1,503.4 859.4,502.9 859.8,502.4 860.1,501.9 860.5,501.4 860.8,500.9 861.2,500.3 861.6,499.7 861.9,499.2 862.3,498.5 862.6,497.9 863.0,497.3 863.3,496.6 863.7,496.0 864.0,495.3 864.4,494.6 864.8,493.9 865.1,493.1 865.5,492.4 865.8,491.6 866.2,490.9 866.5,490.1 866.9,489.3 867.2,488.4 867.6,487.6 867.9,486.7 868.3,485.9 868.7,485.0 869.0,484.1 869.4,483.2 869.7,482.2 870.1,481.3 870.4,480.3 870.8,479.4 871.1,478.4 871.5,477.4 871.9,476.4 872.2,475.3 872.6,474.3 872.9,473.2 873.3,472.2 873.6,471.1 874.0,470.0 874.3,468.9 874.7,467.7 875.0,466.6 875.4,465.5 875.8,464.3 876.1,463.1 876.5,461.9 876.8,460.7 877.2,459.5 877.5,458.3 877.9,457.0 878.2,455.7 878.6,454.5 879.0,453.2 879.3,451.9 879.7,450.6 880.0,449.3 880.4,447.9 880.7,446.6 881.1,445.2 881.4,443.9 881.8,442.5 882.1,441.1 882.5,439.7 882.9,438.3 883.2,436.9 883.6,435.4 883.9,434.0 884.3,432.5 884.6,431.1 885.0,429.6 885.3,428.1 885.7,426.6 886.1,425.1 886.4,423.6 886.8,422.0 887.1,420.5 887.5,418.9 887.8,417.4 888.2,415.8 888.5,414.2 888.9,412.6 889.2,411.1 889.6,409.4 890.0,407.8 890.3,406.2 890.7,404.6 891.0,402.9 891.4,401.3 891.7,399.6 892.1,398.0 892.4,396.3 892.8,394.6 893.2,392.9 893.5,391.2 893.9,389.5 894.2,387.8 894.6,386.1 894.9,384.4 895.3,382.7 895.6,380.9 896.0,379.2 896.3,377.4 896.7,375.7 897.1,373.9 897.4,372.2 897.8,370.4 898.1,368.6 898.5,366.8 898.8,365.0 899.2,363.2 899.5,361.4 899.9,359.6 900.3,357.8 900.6,356.0 901.0,354.2 901.3,352.4 901.7,350.6 902.0,348.7 902.4,346.9 902.7,345.1 903.1,343.2 903.4,341.4 903.8,339.5 904.2,337.7 904.5,335.8 904.9,334.0 905.2,332.1 905.6,330.3 905.9,328.4 906.3,326.5 906.6,324.7 907.0,322.8 907.4,320.9 907.7,319.1 908.1,317.2 908.4,315.3 908.8,313.5 909.1,311.6 909.5,309.7 909.8,307.8 910.2,306.0 910.5,304.1 910.9,302.2 911.3,300.4 911.6,298.5 912.0,296.6 912.3,294.8 912.7,292.9 913.0,291.0 913.4,289.2 913.7,287.3 914.1,285.5 914.4,283.6 914.8,281.7 915.2,279.9 915.5,278.0 915.9,276.2 916.2,274.4 916.6,272.5 916.9,270.7 917.3,268.8 917.6,267.0 918.0,265.2 918.4,263.4 918.7,261.5 919.1,259.7 919.4,257.9 919.8,256.1 920.1,254.3 920.5,252.5 920.8,250.7 921.2,248.9 921.5,247.1 921.9,245.3 922.3,243.5 922.6,241.7 923.0,240.0 923.3,238.2 923.7,236.4 924.0,234.7 924.4,232.9 924.7,231.2 925.1,229.5 925.5,227.7 925.8,226.0 926.2,224.3 926.5,222.6 926.9,220.9 927.2,219.2 927.6,217.5 927.9,215.8 928.3,214.1 928.6,212.4 929.0,210.8 929.4,209.1 929.7,207.5 930.1,205.8 930.4,204.2 930.8,202.6 931.1,201.0 931.5,199.4 931.8,197.8 932.2,196.2 932.6,194.6 932.9,193.0 933.3,191.5 933.6,189.9 934.0,188.4 934.3,186.9 934.7,185.3 935.0,183.8 935.4,182.3 935.7,180.8 936.1,179.4 936.5,177.9 936.8,176.4 937.2,175.0 937.5,173.5 937.9,172.1 938.2,170.7 938.6,169.3 938.9,167.9 939.3,166.5 939.7,165.1 940.0,163.8 940.4,162.4 940.7,161.1 941.1,159.8 941.4,158.5 941.8,157.2 942.1,155.9 942.5,154.6 942.8,153.3 943.2,152.1 943.6,150.9 943.9,149.6 944.3,148.4 944.6,147.2 945.0,146.0 945.3,144.9 945.7,143.7 946.0,142.6 946.4,141.4 946.8,140.3 947.1,139.2 947.5,138.1 947.8,137.0 948.2,136.0 948.5,134.9 948.9,133.9 949.2,132.9 949.6,131.9 950.0,130.9 950.3,129.9 950.7,128.9 951.0,128.0 951.4,127.1 951.7,126.1 952.1,125.2 952.4,124.4 952.8,123.5 953.1,122.6 953.5,121.8 953.9,121.0 954.2,120.1 954.6,119.4 954.9,118.6 955.3,117.8 955.6,117.1 956.0,116.3 956.3,115.6 956.7,114.9 957.1,114.2 957.4,113.6 957.8,112.9 958.1,112.3 958.5,111.6 958.8,111.0 959.2,110.4 959.5,109.9 959.9,109.3 960.2,108.8 960.6,108.3 961.0,107.8 961.3,107.3 961.7,106.8 962.0,106.3 962.4,105.9 962.7,105.5 963.1,105.1 963.4,104.7 963.8,104.3 964.2,104.0 964.5,103.6 964.9,103.3 965.2,103.0 965.6,102.7 965.9,102.4 966.3,102.2 966.6,101.9 967.0,101.7 967.3,101.5 967.7,101.3 968.1,101.2 968.4,101.0 968.8,100.9 969.1,100.8 969.5,100.7 969.8,100.6 970.2,100.5 970.5,100.5 970.9,100.5 971.3,100.4 971.6,100.4 972.0,100.5 972.3,100.5 972.7,100.6 973.0,100.6 973.4,100.7 973.7,100.8 974.1,101.0 974.4,101.1 974.8,101.3 975.2,101.5 975.5,101.7 975.9,101.9 976.2,102.1 976.6,102.3 976.9,102.6 977.3,102.9 977.6,103.2 978.0,103.5 978.4,103.8 978.7,104.2 979.1,104.6 979.4,104.9 979.8,105.3 980.1,105.8 980.5,106.2 980.8,106.7 981.2,107.1 981.5,107.6 981.9,108.1 982.3,108.6 982.6,109.2 983.0,109.7 983.3,110.3 983.7,110.9 984.0,111.5 984.4,112.1 984.7,112.8 985.1,113.4 985.5,114.1 985.8,114.8 986.2,115.5 986.5,116.2 986.9,116.9 987.2,117.7 987.6,118.4 987.9,119.2 988.3,120.0 988.6,120.8 989.0,121.7 989.4,122.5 989.7,123.4 990.1,124.3 990.4,125.1 990.8,126.1 991.1,127.0 991.5,127.9 991.8,128.9 992.2,129.8 992.6,130.8 992.9,131.8 993.3,132.9 993.6,133.9 994.0,134.9 994.3,136.0 994.7,137.1 995.0,138.2 995.4,139.3 995.7,140.4 996.1,141.5 996.5,142.7 996.8,143.8 997.2,145.0 997.5,146.2 997.9,147.4 998.2,148.6 998.6,149.8 998.9,151.1 999.3,152.3 999.7,153.6 1000.0,154.9 1000.4,156.2 1000.7,157.5 1001.1,158.8 1001.4,160.2 1001.8,161.5 1002.1,162.9 1002.5,164.2 1002.8,165.6 1003.2,167.0 1003.6,168.4 1003.9,169.9 1004.3,171.3 1004.6,172.7 1005.0,174.2 1005.3,175.7 1005.7,177.1 1006.0,178.6 1006.4,180.1 1006.8,181.7 1007.1,183.2 1007.5,184.7 1007.8,186.3 1008.2,187.8 1008.5,189.4 1008.9,191.0 1009.2,192.6 1009.6,194.2 1009.9,195.8 1010.3,197.4 1010.7,199.0 1011.0,200.7 1011.4,202.3 1011.7,204.0 1012.1,205.6 1012.4,207.3 1012.8,209.0 1013.1,210.7 1013.5,212.4 1013.9,214.1 1014.2,215.8 1014.6,217.6 1014.9,219.3 1015.3,221.0 1015.6,222.8 1016.0,224.6 1016.3,226.3 1016.7,228.1 1017.0,229.9 1017.4,231.7 1017.8,233.5 1018.1,235.3 1018.5,237.1 1018.8,238.9 1019.2,240.7 1019.5,242.6 1019.9,244.4 1020.2,246.2 1020.6,248.1 1021.0,249.9 1021.3,251.8 1021.7,253.7 1022.0,255.5 1022.4,257.4 1022.7,259.3 1023.1,261.2 1023.4,263.0 1023.8,264.9 1024.1,266.8 1024.5,268.7 1024.9,270.7 1025.2,272.6 1025.6,274.5 1025.9,276.4 1026.3,278.3 1026.6,280.3 1027.0,282.2 1027.3,284.1 1027.7,286.1 1028.0,288.0 1028.4,289.9 1028.8,291.9 1029.1,293.8 1029.5,295.8 1029.8,297.8 1030.2,299.7 1030.5,301.7 1030.9,303.6 1031.2,305.6 1031.6,307.6 1032.0,309.5 1032.3,311.5 1032.7,313.5 1033.0,315.4 1033.4,317.4 1033.7,319.4 1034.1,321.3 1034.4,323.3 1034.8,325.3 1035.1,327.3 1035.5,329.2 1035.9,331.2 1036.2,333.2 1036.6,335.1 1036.9,337.1 1037.3,339.1 1037.6,341.0 1038.0,343.0 1038.3,344.9 1038.7,346.9 1039.1,348.8 1039.4,350.8 1039.8,352.7 1040.1,354.7 1040.5,356.6 1040.8,358.6 1041.2,360.5 1041.5,362.4 1041.9,364.4 1042.2,366.3 1042.6,368.2 1043.0,370.1 1043.3,372.0 1043.7,374.0 1044.0,375.9 1044.4,377.8 1044.7,379.7 1045.1,381.5 1045.4,383.4 1045.8,385.3 1046.2,387.2 1046.5,389.0 1046.9,390.9 1047.2,392.8 1047.6,394.6 1047.9,396.5 1048.3,398.3 1048.6,400.1 1049.0,401.9 1049.3,403.8 1049.7,405.6 1050.1,407.4 1050.4,409.2 1050.8,411.0 1051.1,412.7 1051.5,414.5 1051.8,416.3 1052.2,418.0 1052.5,419.8 1052.9,421.5 1053.3,423.3 1053.6,425.0 1054.0,426.7 1054.3,428.4 1054.7,430.1 1055.0,431.8 1055.4,433.5 1055.7,435.1 1056.1,436.8 1056.4,438.5 1056.8,440.1 1057.2,441.7 1057.5,443.3 1057.9,445.0 1058.2,446.6 1058.6,448.1 1058.9,449.7 1059.3,451.3 1059.6,452.9 1060.0,454.4 1060.4,455.9 1060.7,457.5 1061.1,459.0 1061.4,460.5 1061.8,462.0 1062.1,463.4 1062.5,464.9 1062.8,466.4 1063.2,467.8 1063.5,469.2 1063.9,470.6 1064.3,472.0 1064.6,473.4 1065.0,474.8 1065.3,476.2 1065.7,477.5 1066.0,478.9 1066.4,480.2 1066.7,481.5 1067.1,482.8 1067.5,484.1 1067.8,485.4 1068.2,486.6 1068.5,487.9 1068.9,489.1 1069.2,490.3 1069.6,491.6 1069.9,492.7 1070.3,493.9 1070.7,495.1 1071.0,496.2 1071.4,497.4 1071.7,498.5 1072.1,499.6 1072.4,500.7 1072.8,501.7 1073.1,502.8 1073.5,503.9 1073.8,504.9 1074.2,505.9 1074.6,506.9 1074.9,507.9 1075.3,508.8 1075.6,509.8 1076.0,510.7 1076.3,511.7 1076.7,512.6 1077.0,513.4 1077.4,514.3 1077.8,515.2 1078.1,516.0 1078.5,516.8 1078.8,517.6 1079.2,518.4 1079.5,519.2 1079.9,520.0 1080.2,520.7 1080.6,521.4 1080.9,522.2 1081.3,522.8 1081.7,523.5 1082.0,524.2 1082.4,524.8 1082.7,525.4 1083.1,526.1 1083.4,526.6 1083.8,527.2 1084.1,527.8 1084.5,528.3 1084.9,528.8 1085.2,529.3 1085.6,529.8 1085.9,530.3 1086.3,530.8 1086.6,531.2 1087.0,531.6 1087.3,532.0 1087.7,532.4 1088.0,532.8 1088.4,533.1 1088.8,533.5 1089.1,533.8 1089.5,534.1 1089.8,534.3 1090.2,534.6 1090.5,534.8 1090.9,535.1 1091.2,535.3 1091.6,535.5 1092.0,535.6 1092.3,535.8 1092.7,535.9 1093.0,536.1 1093.4,536.2 1093.7,536.2 1094.1,536.3 1094.4,536.4 1094.8,536.4 1095.1,536.4 1095.5,536.4 1095.9,536.4 1096.2,536.3 1096.6,536.3 1096.9,536.2 1097.3,536.1 1097.6,536.0 1098.0,535.9 1098.3,535.7 1098.7,535.5 1099.1,535.4 1099.4,535.2 1099.8,534.9 1100.1,534.7 1100.5,534.4 1100.8,534.2 1101.2,533.9 1101.5,533.6 1101.9,533.2 1102.2,532.9 1102.6,532.5 1103.0,532.2 1103.3,531.8 1103.7,531.4 1104.0,530.9 1104.4,530.5 1104.7,530.0 1105.1,529.5 1105.4,529.0 1105.8,528.5 1106.2,528.0 1106.5,527.4 1106.9,526.9 1107.2,526.3 1107.6,525.7 1107.9,525.1 1108.3,524.4 1108.6,523.8 1109.0,523.1 1109.3,522.4 1109.7,521.7 1110.1,521.0 1110.4,520.2 1110.8,519.5 1111.1,518.7 1111.5,517.9 1111.8,517.1 1112.2,516.3 1112.5,515.5 1112.9,514.6 1113.3,513.8 1113.6,512.9 1114.0,512.0 1114.3,511.1 1114.7,510.1 1115.0,509.2 1115.4,508.2 1115.7,507.2 1116.1,506.2 1116.4,505.2 1116.8,504.2 1117.2,503.2 1117.5,502.1 1117.9,501.1 1118.2,500.0 1118.6,498.9 1118.9,497.8 1119.3,496.6 1119.6,495.5 1120.0,494.3 1120.4,493.1 1120.7,492.0 1121.1,490.8 1121.4,489.5 1121.8,488.3 1122.1,487.1 1122.5,485.8 1122.8,484.5 1123.2,483.3 1123.5,482.0 1123.9,480.7 1124.3,479.3 1124.6,478.0 1125.0,476.6 1125.3,475.3 1125.7,473.9 1126.0,472.5 1126.4,471.1 1126.7,469.7 1127.1,468.3 1127.5,466.8"/>
<polyline stroke="#00ff00" points="9.2,321.2 9.5,317.2 9.7,313.3 10.0,309.4 10.3,305.6 10.5,301.7 10.8,297.9 11.1,294.0 11.3,290.2 11.6,286.4 11.9,282.7 12.1,278.9 12.4,275.2 12.7,271.4 12.9,267.7 13.2,264.1 13.5,260.4 13.7,256.8 14.0,253.1 14.3,249.5 14.5,245.9 14.8,246.6 15.1,247.2 15.3,247.9 15.6,248.5 15.9,249.2 16.1,249.9 16.4,250.6 16.7,251.3 16.9,252.0 17.2,252.7 17.5,253.4 17.7,254.1 18.0,254.9 18.3,255.6 18.5,256.4 18.8,257.1 19.1,257.9 19.3,258.6 19.6,259.4 19.8,260.2 20.1,261.0 20.4,261.8 20.6,262.6 20.9,263.4 21.2,264.3 21.4,265.1 21.7,265.9 22.0,266.8 22.2,267.6 22.5,268.5 22.8,269.3 23.0,270.2 23.3,271.1 23.6,272.0 23.8,272.9 24.1,273.8 24.4,274.7 24.6,275.6 24.9,276.5 25.2,277.5 25.4,278.4 25.7,279.3 26.0,280.3 26.2,281.2 26.5,282.2 26.8,283.2 27.0,284.1 27.3,285.1 27.6,286.1 27.8,287.1 28.1,288.1 28.4,289.1 28.6,290.1 28.9,291.1 29.2,292.1 29.4,293.2 29.7,294.2 30.0,295.2 30.2,296.3 30.5,297.3 30.8,298.4 31.0,299.5 31.3,300.5 31.6,301.6 31.8,302.7 32.1,303.8 32.4,304.8 32.6,305.9 32.9,307.0 33.2,308.1 33.4,309.3 33.7,310.4 34.0,311.5 34.2,312.6 34.5,313.7 34.8,314.9 35.0,316.0 35.3,317.2 35.6,318.3 35.8,319.5 36.1,320.6 36.4,321.8 36.6,323.0 36.9,324.1 37.2,325.3 37.4,326.5 37.7,327.7 38.0,328.9 38.2,330.0 38.5,331.2 38.8,332.4 39.0,333.6 39.3,334.9 39.6,336.1 39.8,337.3 40.1,338.5 40.4,339.7 40.6,340.9 40.9,342.2 41.1,343.4 41.4,344.6 41.7,345.9 41.9,347.1 42.2,348.4 42.5,349.6 42.7,350.9 43.0,352.1 43.3,353.4 43.5,354.6 43.8,355.9 44.1,357.2 44.3,358.4 44.6,359.7 44.9,361.0 45.1,362.2 45.4,363.5 45.7,364.8 45.9,366.0 46.2,367.3 46.5,368.6 46.7,369.9 47.0,371.2 47.3,372.4 47.5,373.7 47.8,375.0 48.1,376.2 48.3,377.5 48.6,378.8 48.9,380.0 49.1,381.2 49.4,382.3 49.7,383.5 49.9,384.6 50.2,385.6 50.5,386.7 50.7,387.7 51.0,388.6 51.3,389.6 51.5,390.5 51.8,391.3 52.1,392.2 52.2,392.7 62.2,402.8 170.7,402.8 180.7,392.7 180.8,392.4 181.0,391.5 181.3,390.7 181.6,389.7 181.8,388.8 182.1,387.8 182.4,386.7 182.6,385.7 182.9,384.6 183.2,383.5 183.4,382.3 183.7,381.1 183.9,379.9 184.2,378.6 184.5,377.3 184.7,376.0 185.0,374.6 185.3,373.3 185.5,371.9 185.8,370.6 186.1,369.2 186.3,367.9 186.6,366.5 186.9,365.1 187.1,363.8 187.4,362.4 187.7,361.1 187.9,359.7 188.2,358.4 188.5,357.0 188.7,355.7 189.0,354.3 189.3,353.0 189.5,351.6 189.8,350.3 190.1,348.9 190.3,347.6 190.6,346.3 190.9,344.9 191.1,343.6 191.4,342.3 191.7,341.0 191.9,339.6 192.2,338.3 192.5,337.0 192.7,335.7 193.0,334.4 193.3,333.1 193.5,331.8 193.8,330.5 194.1,329.2 194.3,327.9 194.6,326.6 194.9,325.3 195.1,324.1 195.4,322.8 195.7,321.5 195.9,320.3 196.2,319.0 196.5,317.7 196.7,316.5 197.0,315.2 197.3,314.0 197.5,312.7 197.8,311.5 198.1,310.3 198.3,309.1 198.6,307.8 198.9,306.6 199.1,305.4 199.4,304.2 199.7,303.0 199.9,301.8 200.2,300.6 200.5,299.4 200.7,298.2 201.0,297.0 201.3,295.9 201.5,294.7 201.8,293.5 202.1,292.4 202.3,291.2 202.6,290.1 202.9,289.0 203.1,287.8 203.4,286.7 203.7,285.6 203.9,284.5 204.2,283.3 204.5,282.2 204.7,281.1 205.0,280.1 205.2,279.0 205.5,277.9 205.8,276.8 206.0,275.7 206.3,274.7 206.6,273.6 206.8,272.6 207.1,271.5 207.4,270.5 207.6,269.5 207.9,268.5 208.2,267.4 208.4,266.4 208.7,265.4 209.0,264.4 209.2,263.4 209.5,262.5 209.8,261.5 210.0,260.5 210.3,259.6 210.6,258.6 210.8,257.7 211.1,256.7 211.4,255.8 211.6,254.9 211.9,254.0 212.2,253.1 212.4,252.1 212.7,251.3 213.0,250.4 213.2,249.5 213.5,248.6 213.8,247.8 214.0,246.9 214.3,246.1 214.6,245.2 214.8,244.4 215.1,243.6 215.4,242.7 215.6,241.9 215.9,241.1 216.2,240.3 216.4,239.5 216.7,238.8 217.0,238.0 217.2,237.2 217.5,236.5 217.8,235.7 218.0,235.0 218.3,234.3 218.6,233.6 218.8,232.9 219.1,232.2 219.4,231.5 219.6,230.8 219.9,230.1 220.2,229.4 220.4,228.8 220.7,228.1 221.0,227.5 221.2,226.8 221.5,226.2 221.8,225.6 222.0,225.0 222.3,224.4 222.6,223.8 222.8,223.2 223.1,222.6 223.4,222.1 223.6,221.5 223.9,221.0 224.2,220.4 224.4,219.9 224.7,219.4 225.0,218.9 225.2,218.4 225.5,217.9 225.8,217.4 226.0,216.9 226.3,216.5 226.5,216.0 226.8,215.6 227.1,215.2 227.3,214.7 227.6,214.3 227.9,213.9 228.1,213.5 228.4,213.1 228.7,212.7 228.9,212.4 229.2,212.0 229.5,211.7 229.7,211.3 230.0,211.0 230.3,210.7 230.5,210.3 230.8,210.0 231.1,209.7 231.3,209.5 231.6,209.2 231.9,208.9 232.1,208.7 232.4,208.4 232.7,208.2 232.9,207.9 233.2,207.7 233.5,207.5 233.7,207.3 234.0,207.1 234.3,207.0 234.5,206.8 234.8,206.6 235.1,206.5 235.3,206.3 235.6,206.2 235.9,206.1 236.1,206.0 236.4,205.9 236.7,205.8 236.9,205.7 237.2,205.6 237.5,205.6 237.7,205.5 238.0,205.5 238.3,205.4 238.5,205.4 238.8,205.4 239.1,205.4 239.3,205.4 239.6,205.4 239.9,205.5 240.1,205.5 240.4,205.5 240.7,205.6 240.9,205.7 241.2,205.7 241.5,205.8 241.7,205.9 242.0,206.0 242.3,206.1 242.5,206.3 242.8,206.4 243.1,206.5 243.3,206.7 243.6,206.9 243.9,207.0 244.1,207.2 244.4,207.4 244.7,207.6 244.9,207.8 245.2,208.0 245.5,208.3 245.7,208.5 246.0,208.8 246.3,209.0 246.5,209.3 246.8,209.6 247.1,209.9 247.3,210.2 247.6,210.5 247.8,210.8 248.1,211.1 248.4,211.5 248.6,211.8 248.9,212.2 249.2,212.5 249.4,212.9 249.7,213.3 250.0,213.7 250.2,214.1 250.5,214.5 250.8,214.9 251.0,215.4 251.3,215.8 251.6,216.2 251.8,216.7 252.1,217.2 252.4,217.7 252.6,218.1 252.9,218.6 253.2,219.1 253.4,219.7 253.7,220.2 254.0,220.7 254.2,221.3 254.5,221.8 254.8,222.4 255.0,223.0 255.3,223.5 255.6,224.1 255.8,224.7 256.1,225.3 256.4,225.9 256.6,226.6 256.9,227.2 257.2,227.8 257.4,228.5 257.7,229.2 258.0,229.8 258.2,230.5 258.5,231.2 258.8,231.9 259.0,232.6 259.3,233.3 259.6,234.0 259.8,234.8 260.1,235.5 260.4,236.2 260.6,237.0 260.9,237.8 261.2,238.5 261.4,239.3 261.7,240.1 262.0,240.9 262.2,241.7 262.5,242.5 262.8,243.3 263.0,244.2 263.3,245.0 263.6,245.8 263.8,246.7 264.1,247.6 264.4,248.4 264.6,249.3 264.9,250.2 265.2,251.1 265.4,252.0 265.7,252.9 266.0,253.8 266.2,254.7 266.5,255.7 266.8,256.6 267.0,257.6 267.3,258.5 267.6,259.5 267.8,260.4 268.1,261.4 268.3,262.4 268.6,263.4 268.9,264.4 269.1,265.4 269.4,266.4 269.7,267.4 269.9,268.5 270.2,269.5 270.5,270.5 270.7,271.6 271.0,272.6 271.3,273.7 271.5,274.8 271.8,275.8 272.1,276.9 272.3,278.0 272.6,279.1 272.9,280.2 273.1,281.3 273.4,282.4 273.7,283.5 273.9,284.7 274.2,285.8 274.5,286.9 274.7,288.1 275.0,289.2 275.3,290.4 275.5,291.5 275.8,292.7 276.1,293.9 276.3,295.1 276.6,296.3 276.9,297.4 277.1,298.6 277.4,299.8 277.7,301.1 277.9,302.3 278.2,303.5 278.5,304.7 278.7,305.9 279.0,307.2 279.3,308.4 279.5,309.7 279.8,310.9 280.1,312.2 280.3,313.4 280.6,314.7 280.9,316.0 281.1,317.2 281.4,318.5 281.7,319.8 281.9,321.1 282.2,322.4 282.5,323.7 282.7,325.0 283.0,326.3 283.3,327.6 283.5,328.9 283.8,330.2 284.1,331.5 284.3,332.9 284.6,334.2 284.9,335.5 285.1,336.9 285.4,338.2 285.7,339.6 285.9,340.9 286.2,342.2 286.5,343.6 286.7,345.0 287.0,346.3 287.3,347.7 287.5,349.0 287.8,350.4 288.1,351.8 288.3,353.2 288.6,354.5 288.9,355.9 289.1,357.3 289.4,358.7 289.7,360.1 289.9,361.5 290.2,362.8 290.4,364.2 290.7,365.6 291.0,367.0 291.2,368.4 291.5,369.8 291.8,371.2 292.0,372.6 292.3,374.0 292.6,375.3 292.8,376.7 293.1,378.0 293.4,379.3 293.6,380.6 293.9,381.8 294.2,383.0 294.4,384.2 294.7,385.3 295.0,386.4 295.2,387.4 295.5,388.4 295.8,389.4 296.0,390.4 296.3,391.3 296.6,392.2 296.7,392.7 306.7,402.8 420.9,402.8 430.9,392.7 430.9,392.5 431.2,391.6 431.5,390.7 431.7,389.8 432.0,388.8 432.3,387.8 432.5,386.8 432.8,385.7 433.1,384.6 433.3,383.5 433.6,382.3 433.9,381.1 434.1,379.8 434.4,378.6 434.7,377.2 434.9,375.9 435.2,374.5 435.5,373.2 435.7,371.8 436.0,370.4 436.3,369.0 436.5,367.7 436.8,366.3 437.1,364.9 437.3,363.5 437.6,362.1 437.9,360.8 438.1,359.4 438.4,358.0 438.7,356.7 438.9,355.3 439.2,353.9 439.5,352.6 439.7,351.2 440.0,349.9 440.3,348.5 440.5,347.2 440.8,345.8 441.1,344.5 441.3,343.1 441.6,341.8 441.9,340.5 442.1,339.2 442.4,337.8 442.7,336.5 442.9,335.2 443.2,333.9 443.5,332.6 443.7,331.3 444.0,330.0 444.3,328.7 444.5,327.4 444.8,326.1 445.1,324.8 445.3,323.6 445.6,322.3 445.8,321.0 446.1,319.8 446.4,318.5 446.6,317.3 446.9,316.0 447.2,314.8 447.4,313.5 447.7,312.3 448.0,311.1 448.2,309.9 448.5,308.7 448.8,307.4 449.0,306.2 449.3,305.0 449.6,303.8 449.8,302.7 450.1,301.5 450.4,300.3 450.6,299.1 450.9,298.0 451.2,296.8 451.4,295.7 451.7,294.5 452.0,293.4 452.2,292.2 452.5,291.1 452.8,290.0 453.0,288.9 453.3,287.8 453.6,286.7 453.8,285.6 454.1,284.5 454.4,283.4 454.6,282.3 454.9,281.3 455.2,280.2 455.4,279.1 455.7,278.1 456.0,277.1 456.2,276.0 456.5,275.0 456.8,274.0 457.0,273.0 457.3,271.9 457.6,270.9 457.8,270.0 458.1,269.0 458.4,268.0 458.6,267.0 458.9,266.1 459.2,265.1 459.4,264.1 459.7,263.2 460.0,262.3 460.2,261.3 460.5,260.4 460.8,259.5 461.0,258.6 461.3,257.7 461.6,256.8 461.8,256.0 462.1,255.1 462.4,254.2 462.6,253.4 462.9,252.5 463.2,251.7 463.4,250.8 463.7,250.0 464.0,249.2 464.2,248.4 464.5,247.6 464.8,246.8 465.0,246.0 465.3,245.2 465.6,244.5 465.8,243.7 466.1,243.0 466.4,242.2 466.6,241.5 466.9,240.8 467.2,240.0 467.4,239.3 467.7,238.6 467.9,237.9 468.2,237.3 468.5,236.6 468.7,235.9 469.0,235.3 469.3,234.6 469.5,234.0 469.8,233.4 470.1,232.7 470.3,232.1 470.6,231.5 470.9,230.9 471.1,230.3 471.4,229.8 471.7,229.2 471.9,228.6 472.2,228.1 472.5,227.5 472.7,227.0 473.0,226.5 473.3,226.0 473.5,225.5 473.8,225.0 474.1,224.5 474.3,224.0 474.6,223.5 474.9,223.1 475.1,222.6 475.4,222.2 475.7,221.8 475.9,221.3 476.2,220.9 476.5,220.5 476.7,220.1 477.0,219.8 477.3,219.4 477.5,219.0 477.8,218.7 478.1,218.3 478.3,218.0 478.6,217.6 478.9,217.3 479.1,217.0 479.4,216.7 479.7,216.4 479.9,216.1 480.2,215.9 480.5,215.6 480.7,215.4 481.0,215.1 481.3,214.9 481.5,214.7 481.8,214.5 482.1,214.3 482.3,214.1 482.6,213.9 482.9,213.7 483.1,213.5 483.4,213.4 483.7,213.2 483.9,213.1 484.2,213.0 484.5,212.8 484.7,212.7 485.0,212.6 485.3,212.6 485.5,212.5 485.8,212.4 486.1,212.3 486.3,212.3 486.6,212.3 486.9,212.2 487.1,212.2 487.4,212.2 487.7,212.2 487.9,212.2 488.2,212.2 488.5,212.2 488.7,212.3 489.0,212.3 489.2,212.4 489.5,212.4 489.8,212.5 490.0,212.6 490.3,212.7 490.6,212.8 490.8,212.9 491.1,213.0 491.4,213.2 491.6,213.3 491.9,213.5 492.2,213.6 492.4,213.8 492.7,214.0 493.0,214.1 493.2,214.3 493.5,214.6 493.8,214.8 494.0,215.0 494.3,215.2 494.6,215.5 494.8,215.7 495.1,216.0 495.4,216.3 495.6,216.5 495.9,216.8 496.2,217.1 496.4,217.5 496.7,217.8 497.0,218.1 497.2,218.4 497.5,218.8 497.8,219.1 498.0,219.5 498.3,219.9 498.6,220.3 498.8,220.7 499.1,221.1 499.4,221.5 499.6,221.9 499.9,222.3 500.2,222.8 500.4,223.2 500.7,223.7 501.0,224.1 501.2,224.6 501.5,225.1 501.8,225.6 502.0,226.1 502.3,226.6 502.6,227.1 502.8,227.6 503.1,228.2 503.4,228.7 503.6,229.2 503.9,229.8 504.2,230.4 504.4,231.0 504.7,231.5 505.0,232.1 505.2,232.7 505.5,233.4 505.8,234.0 506.0,234.6 506.3,235.2 506.6,235.9 506.8,236.5 507.1,237.2 507.4,237.9 507.6,238.5 507.9,239.2 508.2,239.9 508.4,240.6 508.7,241.3 509.0,242.1 509.2,242.8 509.5,243.5 509.7,244.3 510.0,245.0 510.3,245.8 510.5,246.5 510.8,247.3 511.1,248.1 511.3,248.9 511.6,249.7 511.9,250.5 512.1,251.3 512.4,252.1 512.7,252.9 512.9,253.7 513.2,254.6 513.5,255.4 513.7,256.3 514.0,257.1 514.3,258.0 514.5,258.9 514.8,259.8 515.1,260.7 515.3,261.6 515.6,262.5 515.9,263.4 516.1,264.3 516.4,265.2 516.7,266.2 516.9,267.1 517.2,268.0 517.5,269.0 517.7,269.9 518.0,270.9 518.3,271.9 518.5,272.9 518.8,273.8 519.1,274.8 519.3,275.8 519.6,276.8 519.9,277.8 520.1,278.8 520.4,279.9 520.7,280.9 520.9,281.9 521.2,283.0 521.5,284.0 521.7,285.1 522.0,286.1 522.3,287.2 522.5,288.2 522.8,289.3 523.1,290.4 523.3,291.5 523.6,292.6 523.9,293.7 524.1,294.8 524.4,295.9 524.7,297.0 524.9,298.1 525.2,299.2 525.5,300.3 525.7,301.5 526.0,302.6 526.3,303.7 526.5,304.9 526.8,306.0 527.1,307.2 527.3,308.3 527.6,309.5 527.9,310.7 528.1,311.8 528.4,313.0 528.7,314.2 528.9,315.4 529.2,316.6 529.5,317.8 529.7,319.0 530.0,320.2 530.3,321.4 530.5,322.6 530.8,323.8 531.1,325.0 531.3,326.2 531.6,327.5 531.8,328.7 532.1,329.9 532.4,331.1 532.6,332.4 532.9,333.6 533.2,334.9 533.4,336.1 533.7,337.4 534.0,338.6 534.2,339.9 534.5,341.1 534.8,342.4 535.0,343.7 535.3,344.9 535.6,346.2 535.8,347.5 536.1,348.7 536.4,350.0 536.6,351.3 536.9,352.6 537.2,353.8 537.4,355.1 537.7,356.4 538.0,357.7 538.2,359.0 538.5,360.3 538.8,361.6 539.0,362.9 539.3,364.2 539.6,365.4 539.8,366.7 540.1,368.0 540.4,369.3 540.6,370.6 540.9,371.9 541.2,373.2 541.4,374.5 541.7,375.8 542.0,377.1 542.2,378.3 542.5,379.6 542.8,380.8 543.0,382.0 543.3,383.1 543.6,384.2 543.8,385.3 544.1,386.3 544.4,387.4 544.6,388.3 544.9,389.3 545.2,390.2 545.4,391.1 545.7,391.9 545.9,392.7 555.9,402.8 661.6,402.8 671.6,392.7 671.6,392.5 671.9,391.7 672.2,390.9 672.4,390.0 672.7,389.1 673.0,388.1 673.2,387.1 673.5,386.1 673.8,385.1 674.0,384.0 674.3,382.9 674.6,381.8 674.8,380.6 675.1,379.4 675.4,378.2 675.6,376.9 675.9,375.7 676.2,374.4 676.4,373.2 676.7,371.9 677.0,370.7 677.2,369.4 677.5,368.1 677.8,366.9 678.0,365.6 678.3,364.4 678.6,363.1 678.8,361.8 679.1,360.6 679.4,359.3 679.6,358.1 679.9,356.8 680.1,355.6 680.4,354.3 680.7,353.1 680.9,351.9 681.2,350.6 681.5,349.4 681.7,348.2 682.0,346.9 682.3,345.7 682.5,344.5 682.8,343.3 683.1,342.1 683.3,340.8 683.6,339.6 683.9,338.4 684.1,337.2 684.4,336.0 684.7,334.8 684.9,333.6 685.2,332.4 685.5,331.3 685.7,330.1 686.0,328.9 686.3,327.7 686.5,326.6 686.8,325.4 687.1,324.2 687.3,323.1 687.6,321.9 687.9,320.8 688.1,319.6 688.4,318.5 688.7,317.4 688.9,316.2 689.2,315.1 689.5,314.0 689.7,312.9 690.0,311.8 690.3,310.6 690.5,309.5 690.8,308.4 691.1,307.4 691.3,306.3 691.6,305.2 691.9,304.1 692.1,303.0 692.4,302.0 692.7,300.9 692.9,299.9 693.2,298.8 693.5,297.8 693.7,296.7 694.0,295.7 694.3,294.7 694.5,293.6 694.8,292.6 695.1,291.6 695.3,290.6 695.6,289.6 695.9,288.6 696.1,287.6 696.4,286.7 696.7,285.7 696.9,284.7 697.2,283.8 697.5,282.8 697.7,281.9 698.0,280.9 698.3,280.0 698.5,279.0 698.8,278.1 699.1,277.2 699.3,276.3 699.6,275.4 699.9,274.5 700.1,273.6 700.4,272.7 700.7,271.8 700.9,271.0 701.2,270.1 701.5,269.3 701.7,268.4 702.0,267.6 702.2,266.7 702.5,265.9 702.8,265.1 703.0,264.3 703.3,263.5 703.6,262.7 703.8,261.9 704.1,261.1 704.4,260.3 704.6,259.5 704.9,258.8 705.2,258.0 705.4,257.3 705.7,256.5 706.0,255.8 706.2,255.1 706.5,254.4 706.8,253.6 707.0,252.9 707.3,252.3 707.6,251.6 707.8,250.9 708.1,250.2 708.4,249.6 708.6,248.9 708.9,248.3 709.2,247.6 709.4,247.0 709.7,246.4 710.0,245.7 710.2,245.1 710.5,244.5 710.8,244.0 711.0,243.4 711.3,242.8 711.6,242.2 711.8,241.7 712.1,241.1 712.4,240.6 712.6,240.1 712.9,239.5 713.2,239.0 713.4,238.5 713.7,238.0 714.0,237.5 714.2,237.0 714.5,236.6 714.8,236.1 715.0,235.6 715.3,235.2 715.6,234.8 715.8,234.3 716.1,233.9 716.4,233.5 716.6,233.1 716.9,232.7 717.2,232.3 717.4,231.9 717.7,231.6 718.0,231.2 718.2,230.8 718.5,230.5 718.8,230.2 719.0,229.8 719.3,229.5 719.6,229.2 719.8,228.9 720.1,228.6 720.4,228.4 720.6,228.1 720.9,227.8 721.2,227.6 721.4,227.3 721.7,227.1 722.0,226.9 722.2,226.6 722.5,226.4 722.8,226.2 723.0,226.0 723.3,225.9 723.5,225.7 723.8,225.5 724.1,225.4 724.3,225.2 724.6,225.1 724.9,225.0 725.1,224.8 725.4,224.7 725.7,224.6 725.9,224.5 726.2,224.5 726.5,224.4 726.7,224.3 727.0,224.3 727.3,224.2 727.5,224.2 727.8,224.2 728.1,224.1 728.3,224.1 728.6,224.1 728.9,224.1 729.1,224.2 729.4,224.2 729.7,224.2 729.9,224.3 730.2,224.3 730.5,224.4 730.7,224.5 731.0,224.6 731.3,224.6 731.5,224.7 731.8,224.9 732.1,225.0 732.3,225.1 732.6,225.2 732.9,225.4 733.1,225.5 733.4,225.7 733.7,225.9 733.9,226.1 734.2,226.3 734.5,226.5 734.7,226.7 735.0,226.9 735.3,227.1 735.5,227.4 735.8,227.6 736.1,227.9 736.3,228.1 736.6,228.4 736.9,228.7 737.1,229.0 737.4,229.3 737.7,229.6 737.9,229.9 738.2,230.2 738.5,230.5 738.7,230.9 739.0,231.2 739.3,231.6 739.5,232.0 739.8,232.4 740.1,232.7 740.3,233.1 740.6,233.5 740.9,234.0 741.1,234.4 741.4,234.8 741.7,235.3 741.9,235.7 742.2,236.2 742.5,236.6 742.7,237.1 743.0,237.6 743.3,238.1 743.5,238.6 743.8,239.1 744.1,239.6 744.3,240.1 744.6,240.6 744.8,241.2 745.1,241.7 745.4,242.3 745.6,242.9 745.9,243.4 746.2,244.0 746.4,244.6 746.7,245.2 747.0,245.8 747.2,246.4 747.5,247.1 747.8,247.7 748.0,248.3 748.3,249.0 748.6,249.6 748.8,250.3 749.1,251.0 749.4,251.6 749.6,252.3 749.9,253.0 750.2,253.7 750.4,254.4 750.7,255.1 751.0,255.9 751.2,256.6 751.5,257.3 751.8,258.1 752.0,258.8 752.3,259.6 752.6,260.4 752.8,261.1 753.1,261.9 753.4,262.7 753.6,263.5 753.9,264.3 754.2,265.1 754.4,266.0 754.7,266.8 755.0,267.6 755.2,268.5 755.5,269.3 755.8,270.2 756.0,271.0 756.3,271.9 756.6,272.8 756.8,273.7 757.1,274.5 757.4,275.4 757.6,276.3 757.9,277.2 758.2,278.2 758.4,279.1 758.7,280.0 759.0,280.9 759.2,281.9 759.5,282.8 759.8,283.8 760.0,284.8 760.3,285.7 760.6,286.7 760.8,287.7 761.1,288.7 761.4,289.6 761.6,290.6 761.9,291.6 762.2,292.6 762.4,293.7 762.7,294.7 763.0,295.7 763.2,296.7 763.5,297.8 763.8,298.8 764.0,299.9 764.3,300.9 764.6,302.0 764.8,303.0 765.1,304.1 765.4,305.2 765.6,306.3 765.9,307.3 766.1,308.4 766.4,309.5 766.7,310.6 766.9,311.7 767.2,312.8 767.5,313.9 767.7,315.1 768.0,316.2 768.3,317.3 768.5,318.4 768.8,319.6 769.1,320.7 769.3,321.9 769.6,323.0 769.9,324.2 770.1,325.3 770.4,326.5 770.7,327.6 770.9,328.8 771.2,330.0 771.5,331.2 771.7,332.3 772.0,333.5 772.3,334.7 772.5,335.9 772.8,337.1 773.1,338.3 773.3,339.5 773.6,340.7 773.9,341.9 774.1,343.1 774.4,344.3 774.7,345.6 774.9,346.8 775.2,348.0 775.5,349.2 775.7,350.5 776.0,351.7 776.3,352.9 776.5,354.2 776.8,355.4 777.1,356.6 777.3,357.9 777.6,359.1 777.9,360.4 778.1,361.6 778.4,362.9 778.7,364.1 778.9,365.4 779.2,366.6 779.5,367.9 779.7,369.1 780.0,370.4 780.3,371.6 780.5,372.9 780.8,374.2 781.1,375.4 781.3,376.7 781.6,377.9 781.9,379.1 782.1,380.3 782.4,381.5 782.7,382.6 782.9,383.7 783.2,384.8 783.5,385.9 783.7,386.9 784.0,387.9 784.3,388.8 784.5,389.7 784.8,390.6 785.1,391.5 785.3,392.3 785.4,392.7 795.4,402.8 901.8,402.8 911.8,392.7 911.9,392.5 912.1,391.7 912.4,390.8 912.7,389.9 912.9,388.9 913.2,387.9 913.5,386.9 913.7,385.9 914.0,384.8 914.3,383.7 914.5,382.6 914.8,381.4 915.1,380.2 915.3,378.9 915.6,377.7 915.9,376.4 916.1,375.0 916.4,373.7 916.7,372.4 916.9,371.1 917.2,369.7 917.5,368.4 917.7,367.1 918.0,365.8 918.3,364.4 918.5,363.1 918.8,361.8 919.1,360.5 919.3,359.1 919.6,357.8 919.9,356.5 920.1,355.2 920.4,353.8 920.7,352.5 920.9,351.2 921.2,349.9 921.5,348.6 921.7,347.3 922.0,346.0 922.3,344.7 922.5,343.4 922.8,342.1 923.1,340.8 923.3,339.5 923.6,338.2 923.9,336.9 924.1,335.6 924.4,334.4 924.7,333.1 924.9,331.8 925.2,330.5 925.5,329.3 925.7,328.0 926.0,326.8 926.3,325.5 926.5,324.3 926.8,323.0 927.1,321.8 927.3,320.5 927.6,319.3 927.9,318.1 928.1,316.8 928.4,315.6 928.6,314.4 928.9,313.2 929.2,312.0 929.4,310.8 929.7,309.6 930.0,308.4 930.2,307.2 930.5,306.0 930.8,304.8 931.0,303.6 931.3,302.4 931.6,301.3 931.8,300.1 932.1,299.0 932.4,297.8 932.6,296.7 932.9,295.5 933.2,294.4 933.4,293.2 933.7,292.1 934.0,291.0 934.2,289.9 934.5,288.8 934.8,287.7 935.0,286.6 935.3,285.5 935.6,284.4 935.8,283.3 936.1,282.2 936.4,281.2 936.6,280.1 936.9,279.0 937.2,278.0 937.4,276.9 937.7,275.9 938.0,274.9 938.2,273.8 938.5,272.8 938.8,271.8 939.0,270.8 939.3,269.8 939.6,268.8 939.8,267.8 940.1,266.8 940.4,265.9 940.6,264.9 940.9,263.9 941.2,263.0 941.4,262.0 941.7,261.1 942.0,260.2 942.2,259.2 942.5,258.3 942.8,257.4 943.0,256.5 943.3,255.6 943.6,254.7 943.8,253.8 944.1,253.0 944.4,252.1 944.6,251.2 944.9,250.4 945.2,249.5 945.4,248.7 945.7,247.9 946.0,247.0 946.2,246.2 946.5,245.4 946.8,244.6 947.0,243.8 947.3,243.1 947.6,242.3 947.8,241.5 948.1,240.7 948.4,240.0 948.6,239.3 948.9,238.5 949.2,237.8 949.4,237.1 949.7,236.4 950.0,235.7 950.2,235.0 950.5,234.3 950.7,233.6 951.0,232.9 951.3,232.3 951.5,231.6 951.8,231.0 952.1,230.3 952.3,229.7 952.6,229.1 952.9,228.5 953.1,227.9 953.4,227.3 953.7,226.7 953.9,226.1 954.2,225.5 954.5,225.0 954.7,224.4 955.0,223.9 955.3,223.4 955.5,222.8 955.8,222.3 956.1,221.8 956.3,221.3 956.6,220.8 956.9,220.4 957.1,219.9 957.4,219.4 957.7,219.0 957.9,218.5 958.2,218.1 958.5,217.7 958.7,217.3 959.0,216.9 959.3,216.5 959.5,216.1 959.8,215.7 960.1,215.3 960.3,215.0 960.6,214.6 960.9,214.3 961.1,213.9 961.4,213.6 961.7,213.3 961.9,213.0 962.2,212.7 962.5,212.4 962.7,212.2 963.0,211.9 963.3,211.6 963.5,211.4 963.8,211.1 964.1,210.9 964.3,210.7 964.6,210.5 964.9,210.3 965.1,210.1 965.4,209.9 965.7,209.8 965.9,209.6 966.2,209.4 966.5,209.3 966.7,209.2 967.0,209.0 967.3,208.9 967.5,208.8 967.8,208.7 968.1,208.6 968.3,208.6 968.6,208.5 968.9,208.5 969.1,208.4 969.4,208.4 969.7,208.3 969.9,208.3 970.2,208.3 970.5,208.3 970.7,208.3 971.0,208.4 971.3,208.4 971.5,208.4 971.8,208.5 972.0,208.6 972.3,208.6 972.6,208.7 972.8,208.8 973.1,208.9 973.4,209.0 973.6,209.1 973.9,209.3 974.2,209.4 974.4,209.5 974.7,209.7 975.0,209.9 975.2,210.0 975.5,210.2 975.8,210.4 976.0,210.6 976.3,210.8 976.6,211.1 976.8,211.3 977.1,211.6 977.4,211.8 977.6,212.1 977.9,212.3 978.2,212.6 978.4,212.9 978.7,213.2 979.0,213.5 979.2,213.9 979.5,214.2 979.8,214.5 980.0,214.9 980.3,215.2 980.6,215.6 980.8,216.0 981.1,216.4 981.4,216.8 981.6,217.2 981.9,217.6 982.2,218.0 982.4,218.4 982.7,218.9 983.0,219.3 983.2,219.8 983.5,220.3 983.8,220.8 984.0,221.2 984.3,221.7 984.6,222.2 984.8,222.8 985.1,223.3 985.4,223.8 985.6,224.4 985.9,224.9 986.2,225.5 986.4,226.1 986.7,226.6 987.0,227.2 987.2,227.8 987.5,228.4 987.8,229.1 988.0,229.7 988.3,230.3 988.6,231.0 988.8,231.6 989.1,232.3 989.4,232.9 989.6,233.6 989.9,234.3 990.2,235.0 990.4,235.7 990.7,236.4 991.0,237.1 991.2,237.9 991.5,238.6 991.8,239.3 992.0,240.1 992.3,240.9 992.6,241.6 992.8,242.4 993.1,243.2 993.3,244.0 993.6,244.8 993.9,245.6 994.1,246.4 994.4,247.2 994.7,248.1 994.9,248.9 995.2,249.8 995.5,250.6 995.7,251.5 996.0,252.4 996.3,253.3 996.5,254.2 996.8,255.1 997.1,256.0 997.3,256.9 997.6,257.8 997.9,258.7 998.1,259.7 998.4,260.6 998.7,261.6 998.9,262.5 999.2,263.5 999.5,264.5 999.7,265.4 1000.0,266.4 1000.3,267.4 1000.5,268.4 1000.8,269.4 1001.1,270.5 1001.3,271.5 1001.6,272.5 1001.9,273.5 1002.1,274.6 1002.4,275.6 1002.7,276.7 1002.9,277.8 1003.2,278.8 1003.5,279.9 1003.7,281.0 1004.0,282.1 1004.3,283.2 1004.5,284.3 1004.8,285.4 1005.1,286.5 1005.3,287.6 1005.6,288.8 1005.9,289.9 1006.1,291.0 1006.4,292.2 1006.7,293.3 1006.9,294.5 1007.2,295.7 1007.5,296.8 1007.7,298.0 1008.0,299.2 1008.3,300.4 1008.5,301.6 1008.8,302.8 1009.1,304.0 1009.3,305.2 1009.6,306.4 1009.9,307.6 1010.1,308.8 1010.4,310.1 1010.7,311.3 1010.9,312.5 1011.2,313.8 1011.5,315.0 1011.7,316.3 1012.0,317.5 1012.3,318.8 1012.5,320.1 1012.8,321.4 1013.1,322.6 1013.3,323.9 1013.6,325.2 1013.9,326.5 1014.1,327.8 1014.4,329.1 1014.6,330.4 1014.9,331.7 1015.2,333.0 1015.4,334.3 1015.7,335.6 1016.0,337.0 1016.2,338.3 1016.5,339.6 1016.8,341.0 1017.0,342.3 1017.3,343.6 1017.6,345.0 1017.8,346.3 1018.1,347.7 1018.4,349.0 1018.6,350.4 1018.9,351.8 1019.2,353.1 1019.4,354.5 1019.7,355.9 1020.0,357.2 1020.2,358.6 1020.5,360.0 1020.8,361.3 1021.0,362.7 1021.3,364.1 1021.6,365.5 1021.8,366.9 1022.1,368.2 1022.4,369.6 1022.6,371.0 1022.9,372.4 1023.2,373.8 1023.4,375.1 1023.7,376.5 1024.0,377.8 1024.2,379.1 1024.5,380.4 1024.8,381.6 1025.0,382.8 1025.3,384.0 1025.6,385.1 1025.8,386.2 1026.1,387.2 1026.4,388.3 1026.6,389.2 1026.9,390.2 1027.2,391.1 1027.4,392.0 1027.6,392.7 1037.6,402.8 1127.5,402.8"/>
<polyline stroke="#ff0000" points="34.0,400.0 44.7,389.6 55.3,384.0 66.0,380.5 76.6,376.5 87.3,372.0 97.9,367.1 108.6,361.8 119.2,356.2 129.9,350.2 140.5,343.9 151.2,337.4 161.8,330.7 172.5,323.9 183.2,315.9 193.8,303.5 204.4,285.1 215.1,261.6 225.7,234.6 236.4,206.0 247.0,177.7 257.7,151.8 268.3,130.2 279.0,114.7 289.6,106.6 300.3,105.7 310.9,108.9 321.6,113.6 332.2,119.8 342.9,127.4 353.5,136.4 364.2,146.7 374.8,158.2 385.5,170.9 396.1,184.6 406.8,199.3 417.4,214.8 428.1,231.0 438.7,245.0 449.4,253.7 460.0,257.1 470.7,256.5 481.3,253.6 492.0,250.0 502.6,247.6 513.3,248.2 523.9,253.3 534.6,264.1 545.2,281.1 555.9,302.1 566.5,323.7 577.2,345.3 587.8,366.6 598.5,387.4 609.1,407.8 619.8,427.4 630.4,446.2 641.1,464.1 651.7,480.8 662.4,496.2 673.0,509.5 683.7,517.5 694.3,518.3 705.0,512.8 715.6,502.1 726.3,488.0 736.9,472.3 747.6,456.8 758.2,443.2 768.9,433.0 779.5,427.4 790.2,425.8 800.8,425.5 811.5,424.4 822.1,422.4 832.8,419.6 843.4,416.1 854.1,411.8 864.7,406.7 875.4,401.0 886.0,394.6 896.7,387.6 907.3,380.0 918.0,369.7 928.6,353.7 939.3,331.6 949.9,304.6 960.6,274.4 971.2,242.9 981.9,212.0 992.5,183.9 1003.2,160.4 1013.8,143.2 1024.5,133.4 1035.1,129.4 1045.8,128.2 1056.4,128.3 1067.1,129.8 1077.8,132.6 1088.4,136.8 1099.0,142.2 1109.7,149.0 1120.3,156.9"/>
</g>

<!-- schematic window frame -->
<rect x="0" y="690" width="1174" height="1" fill="#a0a0a0"/>
<rect x="0" y="691" width="1174" height="1" fill="#696969"/>
<rect x="0" y="690" width="1" height="170" fill="#646464"/>
<rect x="1" y="692" width="1" height="168" fill="#d2d2d2"/>
<rect x="2" y="692" width="1172" height="168" fill="#c0c0c0"/>
<rect x="1174" y="690" width="2" height="172" fill="#ffffff"/>
<rect x="0" y="860" width="1176" height="2" fill="#ffffff"/>
<path fill="#000" shape-rendering="crispEdges" d="M8 692h1v1h-1zM18 692h1v1h-1zM28 692h1v1h-1zM38 692h1v1h-1zM49 692h1v1h-1zM59 692h1v1h-1zM69 692h1v1h-1zM79 692h1v1h-1zM89 692h1v1h-1zM99 692h1v1h-1zM109 692h1v1h-1zM119 692h1v1h-1zM129 692h1v1h-1zM139 692h1v1h-1zM149 692h1v1h-1zM159 692h1v1h-1zM170 692h1v1h-1zM180 692h1v1h-1zM190 692h1v1h-1zM200 692h1v1h-1zM210 692h1v1h-1zM220 692h1v1h-1zM230 692h1v1h-1zM240 692h1v1h-1zM250 692h1v1h-1zM260 692h1v1h-1zM270 692h1v1h-1zM280 692h1v1h-1zM290 692h1v1h-1zM301 692h1v1h-1zM311 692h1v1h-1zM321 692h1v1h-1zM331 692h1v1h-1zM341 692h1v1h-1zM351 692h1v1h-1zM361 692h1v1h-1zM371 692h1v1h-1zM381 692h1v1h-1zM391 692h1v1h-1zM401 692h1v1h-1zM411 692h1v1h-1zM422 692h1v1h-1zM432 692h1v1h-1zM442 692h1v1h-1zM452 692h1v1h-1zM462 692h1v1h-1zM472 692h1v1h-1zM482 692h1v1h-1zM492 692h1v1h-1zM502 692h1v1h-1zM512 692h1v1h-1zM522 692h1v1h-1zM532 692h1v1h-1zM543 692h1v1h-1zM553 692h1v1h-1zM563 692h1v1h-1zM573 692h1v1h-1zM583 692h1v1h-1zM593 692h1v1h-1zM603 692h1v1h-1zM613 692h1v1h-1zM623 692h1v1h-1zM633 692h1v1h-1zM643 692h1v1h-1zM653 692h1v1h-1zM664 692h1v1h-1zM674 692h1v1h-1zM684 692h1v1h-1zM694 692h1v1h-1zM704 692h1v1h-1zM714 692h1v1h-1zM724 692h1v1h-1zM734 692h1v1h-1zM744 692h1v1h-1zM754 692h1v1h-1zM764 692h1v1h-1zM774 692h1v1h-1zM785 692h1v1h-1zM795 692h1v1h-1zM805 692h1v1h-1zM815 692h1v1h-1zM825 692h1v1h-1zM835 692h1v1h-1zM845 692h1v1h-1zM855 692h1v1h-1zM865 692h1v1h-1zM875 692h1v1h-1zM885 692h1v1h-1zM895 692h1v1h-1zM905 692h1v1h-1zM916 692h1v1h-1zM926 692h1v1h-1zM936 692h1v1h-1zM946 692h1v1h-1zM956 692h1v1h-1zM966 692h1v1h-1zM976 692h1v1h-1zM986 692h1v1h-1zM996 692h1v1h-1zM1006 692h1v1h-1zM1016 692h1v1h-1zM1026 692h1v1h-1zM1037 692h1v1h-1zM1047 692h1v1h-1zM1057 692h1v1h-1zM1067 692h1v1h-1zM1077 692h1v1h-1zM1087 692h1v1h-1zM1097 692h1v1h-1zM1107 692h1v1h-1zM1117 692h1v1h-1zM1127 692h1v1h-1zM1137 692h1v1h-1zM1147 692h1v1h-1zM1158 692h1v1h-1zM1168 692h1v1h-1zM8 701h1v1h-1zM18 701h1v1h-1zM28 701h1v1h-1zM38 701h1v1h-1zM49 701h1v1h-1zM59 701h1v1h-1zM69 701h1v1h-1zM79 701h1v1h-1zM89 701h1v1h-1zM99 701h1v1h-1zM109 701h1v1h-1zM119 701h1v1h-1zM129 701h1v1h-1zM139 701h1v1h-1zM149 701h1v1h-1zM159 701h1v1h-1zM170 701h1v1h-1zM180 701h1v1h-1zM190 701h1v1h-1zM200 701h1v1h-1zM210 701h1v1h-1zM220 701h1v1h-1zM230 701h1v1h-1zM240 701h1v1h-1zM250 701h1v1h-1zM260 701h1v1h-1zM270 701h1v1h-1zM280 701h1v1h-1zM290 701h1v1h-1zM301 701h1v1h-1zM311 701h1v1h-1zM321 701h1v1h-1zM331 701h1v1h-1zM341 701h1v1h-1zM351 701h1v1h-1zM361 701h1v1h-1zM371 701h1v1h-1zM381 701h1v1h-1zM391 701h1v1h-1zM401 701h1v1h-1zM411 701h1v1h-1zM422 701h1v1h-1zM432 701h1v1h-1zM442 701h1v1h-1zM452 701h1v1h-1zM462 701h1v1h-1zM472 701h1v1h-1zM482 701h1v1h-1zM492 701h1v1h-1zM502 701h1v1h-1zM512 701h1v1h-1zM522 701h1v1h-1zM532 701h1v1h-1zM543 701h1v1h-1zM553 701h1v1h-1zM563 701h1v1h-1zM573 701h1v1h-1zM583 701h1v1h-1zM593 701h1v1h-1zM603 701h1v1h-1zM613 701h1v1h-1zM623 701h1v1h-1zM633 701h1v1h-1zM643 701h1v1h-1zM653 701h1v1h-1zM664 701h1v1h-1zM674 701h1v1h-1zM684 701h1v1h-1zM694 701h1v1h-1zM704 701h1v1h-1zM714 701h1v1h-1zM724 701h1v1h-1zM734 701h1v1h-1zM744 701h1v1h-1zM754 701h1v1h-1zM764 701h1v1h-1zM774 701h1v1h-1zM785 701h1v1h-1zM795 701h1v1h-1zM805 701h1v1h-1zM815 701h1v1h-1zM825 701h1v1h-1zM835 701h1v1h-1zM845 701h1v1h-1zM855 701h1v1h-1zM865 701h1v1h-1zM875 701h1v1h-1zM885 701h1v1h-1zM895 701h1v1h-1zM905 701h1v1h-1zM916 701h1v1h-1zM926 701h1v1h-1zM936 701h1v1h-1zM946 701h1v1h-1zM956 701h1v1h-1zM966 701h1v1h-1zM976 701h1v1h-1zM986 701h1v1h-1zM996 701h1v1h-1zM1006 701h1v1h-1zM1016 701h1v1h-1zM1026 701h1v1h-1zM1037 701h1v1h-1zM1047 701h1v1h-1zM1057 701h1v1h-1zM1067 701h1v1h-1zM1077 701h1v1h-1zM1087 701h1v1h-1zM1097 701h1v1h-1zM1107 701h1v1h-1zM1117 701h1v1h-1zM1127 701h1v1h-1zM1137 701h1v1h-1zM1147 701h1v1h-1zM1158 701h1v1h-1zM1168 701h1v1h-1zM8 711h1v1h-1zM18 711h1v1h-1zM28 711h1v1h-1zM38 711h1v1h-1zM49 711h1v1h-1zM59 711h1v1h-1zM69 711h1v1h-1zM79 711h1v1h-1zM89 711h1v1h-1zM99 711h1v1h-1zM109 711h1v1h-1zM119 711h1v1h-1zM129 711h1v1h-1zM139 711h1v1h-1zM149 711h1v1h-1zM159 711h1v1h-1zM170 711h1v1h-1zM180 711h1v1h-1zM190 711h1v1h-1zM200 711h1v1h-1zM210 711h1v1h-1zM220 711h1v1h-1zM230 711h1v1h-1zM240 711h1v1h-1zM250 711h1v1h-1zM260 711h1v1h-1zM270 711h1v1h-1zM280 711h1v1h-1zM290 711h1v1h-1zM301 711h1v1h-1zM311 711h1v1h-1zM321 711h1v1h-1zM331 711h1v1h-1zM341 711h1v1h-1zM351 711h1v1h-1zM361 711h1v1h-1zM371 711h1v1h-1zM381 711h1v1h-1zM391 711h1v1h-1zM401 711h1v1h-1zM411 711h1v1h-1zM422 711h1v1h-1zM432 711h1v1h-1zM442 711h1v1h-1zM452 711h1v1h-1zM462 711h1v1h-1zM472 711h1v1h-1zM482 711h1v1h-1zM492 711h1v1h-1zM502 711h1v1h-1zM512 711h1v1h-1zM522 711h1v1h-1zM532 711h1v1h-1zM543 711h1v1h-1zM553 711h1v1h-1zM563 711h1v1h-1zM573 711h1v1h-1zM583 711h1v1h-1zM593 711h1v1h-1zM603 711h1v1h-1zM613 711h1v1h-1zM623 711h1v1h-1zM633 711h1v1h-1zM643 711h1v1h-1zM653 711h1v1h-1zM664 711h1v1h-1zM674 711h1v1h-1zM684 711h1v1h-1zM694 711h1v1h-1zM704 711h1v1h-1zM714 711h1v1h-1zM724 711h1v1h-1zM734 711h1v1h-1zM744 711h1v1h-1zM754 711h1v1h-1zM764 711h1v1h-1zM774 711h1v1h-1zM785 711h1v1h-1zM795 711h1v1h-1zM805 711h1v1h-1zM815 711h1v1h-1zM825 711h1v1h-1zM835 711h1v1h-1zM845 711h1v1h-1zM855 711h1v1h-1zM865 711h1v1h-1zM875 711h1v1h-1zM885 711h1v1h-1zM895 711h1v1h-1zM905 711h1v1h-1zM916 711h1v1h-1zM926 711h1v1h-1zM936 711h1v1h-1zM946 711h1v1h-1zM956 711h1v1h-1zM966 711h1v1h-1zM976 711h1v1h-1zM986 711h1v1h-1zM996 711h1v1h-1zM1006 711h1v1h-1zM1016 711h1v1h-1zM1026 711h1v1h-1zM1037 711h1v1h-1zM1047 711h1v1h-1zM1057 711h1v1h-1zM1067 711h1v1h-1zM1077 711h1v1h-1zM1087 711h1v1h-1zM1097 711h1v1h-1zM1107 711h1v1h-1zM1117 711h1v1h-1zM1127 711h1v1h-1zM1137 711h1v1h-1zM1147 711h1v1h-1zM1158 711h1v1h-1zM1168 711h1v1h-1zM8 721h1v1h-1zM18 721h1v1h-1zM28 721h1v1h-1zM38 721h1v1h-1zM49 721h1v1h-1zM59 721h1v1h-1zM69 721h1v1h-1zM79 721h1v1h-1zM89 721h1v1h-1zM99 721h1v1h-1zM109 721h1v1h-1zM119 721h1v1h-1zM129 721h1v1h-1zM139 721h1v1h-1zM149 721h1v1h-1zM159 721h1v1h-1zM170 721h1v1h-1zM180 721h1v1h-1zM190 721h1v1h-1zM200 721h1v1h-1zM210 721h1v1h-1zM220 721h1v1h-1zM230 721h1v1h-1zM240 721h1v1h-1zM250 721h1v1h-1zM260 721h1v1h-1zM270 721h1v1h-1zM280 721h1v1h-1zM290 721h1v1h-1zM301 721h1v1h-1zM311 721h1v1h-1zM321 721h1v1h-1zM331 721h1v1h-1zM341 721h1v1h-1zM351 721h1v1h-1zM361 721h1v1h-1zM371 721h1v1h-1zM381 721h1v1h-1zM391 721h1v1h-1zM401 721h1v1h-1zM411 721h1v1h-1zM422 721h1v1h-1zM432 721h1v1h-1zM442 721h1v1h-1zM452 721h1v1h-1zM462 721h1v1h-1zM472 721h1v1h-1zM482 721h1v1h-1zM492 721h1v1h-1zM502 721h1v1h-1zM512 721h1v1h-1zM522 721h1v1h-1zM532 721h1v1h-1zM543 721h1v1h-1zM553 721h1v1h-1zM563 721h1v1h-1zM573 721h1v1h-1zM583 721h1v1h-1zM593 721h1v1h-1zM603 721h1v1h-1zM613 721h1v1h-1zM623 721h1v1h-1zM633 721h1v1h-1zM643 721h1v1h-1zM653 721h1v1h-1zM664 721h1v1h-1zM674 721h1v1h-1zM684 721h1v1h-1zM694 721h1v1h-1zM704 721h1v1h-1zM714 721h1v1h-1zM724 721h1v1h-1zM734 721h1v1h-1zM744 721h1v1h-1zM754 721h1v1h-1zM764 721h1v1h-1zM774 721h1v1h-1zM785 721h1v1h-1zM795 721h1v1h-1zM805 721h1v1h-1zM815 721h1v1h-1zM825 721h1v1h-1zM835 721h1v1h-1zM845 721h1v1h-1zM855 721h1v1h-1zM865 721h1v1h-1zM875 721h1v1h-1zM885 721h1v1h-1zM895 721h1v1h-1zM905 721h1v1h-1zM916 721h1v1h-1zM926 721h1v1h-1zM936 721h1v1h-1zM946 721h1v1h-1zM956 721h1v1h-1zM966 721h1v1h-1zM976 721h1v1h-1zM986 721h1v1h-1zM996 721h1v1h-1zM1006 721h1v1h-1zM1016 721h1v1h-1zM1026 721h1v1h-1zM1037 721h1v1h-1zM1047 721h1v1h-1zM1057 721h1v1h-1zM1067 721h1v1h-1zM1077 721h1v1h-1zM1087 721h1v1h-1zM1097 721h1v1h-1zM1107 721h1v1h-1zM1117 721h1v1h-1zM1127 721h1v1h-1zM1137 721h1v1h-1zM1147 721h1v1h-1zM1158 721h1v1h-1zM1168 721h1v1h-1zM8 731h1v1h-1zM18 731h1v1h-1zM28 731h1v1h-1zM38 731h1v1h-1zM49 731h1v1h-1zM59 731h1v1h-1zM69 731h1v1h-1zM79 731h1v1h-1zM89 731h1v1h-1zM99 731h1v1h-1zM109 731h1v1h-1zM119 731h1v1h-1zM129 731h1v1h-1zM139 731h1v1h-1zM149 731h1v1h-1zM159 731h1v1h-1zM170 731h1v1h-1zM180 731h1v1h-1zM190 731h1v1h-1zM200 731h1v1h-1zM210 731h1v1h-1zM220 731h1v1h-1zM230 731h1v1h-1zM240 731h1v1h-1zM250 731h1v1h-1zM260 731h1v1h-1zM270 731h1v1h-1zM280 731h1v1h-1zM290 731h1v1h-1zM301 731h1v1h-1zM311 731h1v1h-1zM321 731h1v1h-1zM331 731h1v1h-1zM341 731h1v1h-1zM351 731h1v1h-1zM361 731h1v1h-1zM371 731h1v1h-1zM381 731h1v1h-1zM391 731h1v1h-1zM401 731h1v1h-1zM411 731h1v1h-1zM422 731h1v1h-1zM432 731h1v1h-1zM442 731h1v1h-1zM452 731h1v1h-1zM462 731h1v1h-1zM472 731h1v1h-1zM482 731h1v1h-1zM492 731h1v1h-1zM502 731h1v1h-1zM512 731h1v1h-1zM522 731h1v1h-1zM532 731h1v1h-1zM543 731h1v1h-1zM553 731h1v1h-1zM563 731h1v1h-1zM573 731h1v1h-1zM583 731h1v1h-1zM593 731h1v1h-1zM603 731h1v1h-1zM613 731h1v1h-1zM623 731h1v1h-1zM633 731h1v1h-1zM643 731h1v1h-1zM653 731h1v1h-1zM664 731h1v1h-1zM674 731h1v1h-1zM684 731h1v1h-1zM694 731h1v1h-1zM704 731h1v1h-1zM714 731h1v1h-1zM724 731h1v1h-1zM734 731h1v1h-1zM744 731h1v1h-1zM754 731h1v1h-1zM764 731h1v1h-1zM774 731h1v1h-1zM785 731h1v1h-1zM795 731h1v1h-1zM805 731h1v1h-1zM815 731h1v1h-1zM825 731h1v1h-1zM835 731h1v1h-1zM845 731h1v1h-1zM855 731h1v1h-1zM865 731h1v1h-1zM875 731h1v1h-1zM885 731h1v1h-1zM895 731h1v1h-1zM905 731h1v1h-1zM916 731h1v1h-1zM926 731h1v1h-1zM936 731h1v1h-1zM946 731h1v1h-1zM956 731h1v1h-1zM966 731h1v1h-1zM976 731h1v1h-1zM986 731h1v1h-1zM996 731h1v1h-1zM1006 731h1v1h-1zM1016 731h1v1h-1zM1026 731h1v1h-1zM1037 731h1v1h-1zM1047 731h1v1h-1zM1057 731h1v1h-1zM1067 731h1v1h-1zM1077 731h1v1h-1zM1087 731h1v1h-1zM1097 731h1v1h-1zM1107 731h1v1h-1zM1117 731h1v1h-1zM1127 731h1v1h-1zM1137 731h1v1h-1zM1147 731h1v1h-1zM1158 731h1v1h-1zM1168 731h1v1h-1zM8 741h1v1h-1zM18 741h1v1h-1zM28 741h1v1h-1zM38 741h1v1h-1zM49 741h1v1h-1zM59 741h1v1h-1zM69 741h1v1h-1zM79 741h1v1h-1zM89 741h1v1h-1zM99 741h1v1h-1zM109 741h1v1h-1zM119 741h1v1h-1zM129 741h1v1h-1zM139 741h1v1h-1zM149 741h1v1h-1zM159 741h1v1h-1zM170 741h1v1h-1zM180 741h1v1h-1zM190 741h1v1h-1zM200 741h1v1h-1zM210 741h1v1h-1zM220 741h1v1h-1zM230 741h1v1h-1zM240 741h1v1h-1zM250 741h1v1h-1zM260 741h1v1h-1zM270 741h1v1h-1zM280 741h1v1h-1zM290 741h1v1h-1zM301 741h1v1h-1zM311 741h1v1h-1zM321 741h1v1h-1zM331 741h1v1h-1zM341 741h1v1h-1zM351 741h1v1h-1zM361 741h1v1h-1zM371 741h1v1h-1zM381 741h1v1h-1zM391 741h1v1h-1zM401 741h1v1h-1zM411 741h1v1h-1zM422 741h1v1h-1zM432 741h1v1h-1zM442 741h1v1h-1zM452 741h1v1h-1zM462 741h1v1h-1zM472 741h1v1h-1zM482 741h1v1h-1zM492 741h1v1h-1zM502 741h1v1h-1zM512 741h1v1h-1zM522 741h1v1h-1zM532 741h1v1h-1zM543 741h1v1h-1zM553 741h1v1h-1zM563 741h1v1h-1zM573 741h1v1h-1zM583 741h1v1h-1zM593 741h1v1h-1zM603 741h1v1h-1zM613 741h1v1h-1zM623 741h1v1h-1zM633 741h1v1h-1zM643 741h1v1h-1zM653 741h1v1h-1zM664 741h1v1h-1zM674 741h1v1h-1zM684 741h1v1h-1zM694 741h1v1h-1zM704 741h1v1h-1zM714 741h1v1h-1zM724 741h1v1h-1zM734 741h1v1h-1zM744 741h1v1h-1zM754 741h1v1h-1zM764 741h1v1h-1zM774 741h1v1h-1zM785 741h1v1h-1zM795 741h1v1h-1zM805 741h1v1h-1zM815 741h1v1h-1zM825 741h1v1h-1zM835 741h1v1h-1zM845 741h1v1h-1zM855 741h1v1h-1zM865 741h1v1h-1zM875 741h1v1h-1zM885 741h1v1h-1zM895 741h1v1h-1zM905 741h1v1h-1zM916 741h1v1h-1zM926 741h1v1h-1zM936 741h1v1h-1zM946 741h1v1h-1zM956 741h1v1h-1zM966 741h1v1h-1zM976 741h1v1h-1zM986 741h1v1h-1zM996 741h1v1h-1zM1006 741h1v1h-1zM1016 741h1v1h-1zM1026 741h1v1h-1zM1037 741h1v1h-1zM1047 741h1v1h-1zM1057 741h1v1h-1zM1067 741h1v1h-1zM1077 741h1v1h-1zM1087 741h1v1h-1zM1097 741h1v1h-1zM1107 741h1v1h-1zM1117 741h1v1h-1zM1127 741h1v1h-1zM1137 741h1v1h-1zM1147 741h1v1h-1zM1158 741h1v1h-1zM1168 741h1v1h-1zM8 751h1v1h-1zM18 751h1v1h-1zM28 751h1v1h-1zM38 751h1v1h-1zM49 751h1v1h-1zM59 751h1v1h-1zM69 751h1v1h-1zM79 751h1v1h-1zM89 751h1v1h-1zM99 751h1v1h-1zM109 751h1v1h-1zM119 751h1v1h-1zM129 751h1v1h-1zM139 751h1v1h-1zM149 751h1v1h-1zM159 751h1v1h-1zM170 751h1v1h-1zM180 751h1v1h-1zM190 751h1v1h-1zM200 751h1v1h-1zM210 751h1v1h-1zM220 751h1v1h-1zM230 751h1v1h-1zM240 751h1v1h-1zM250 751h1v1h-1zM260 751h1v1h-1zM270 751h1v1h-1zM280 751h1v1h-1zM290 751h1v1h-1zM301 751h1v1h-1zM311 751h1v1h-1zM321 751h1v1h-1zM331 751h1v1h-1zM341 751h1v1h-1zM351 751h1v1h-1zM361 751h1v1h-1zM371 751h1v1h-1zM381 751h1v1h-1zM391 751h1v1h-1zM401 751h1v1h-1zM411 751h1v1h-1zM422 751h1v1h-1zM432 751h1v1h-1zM442 751h1v1h-1zM452 751h1v1h-1zM462 751h1v1h-1zM472 751h1v1h-1zM482 751h1v1h-1zM492 751h1v1h-1zM502 751h1v1h-1zM512 751h1v1h-1zM522 751h1v1h-1zM532 751h1v1h-1zM543 751h1v1h-1zM553 751h1v1h-1zM563 751h1v1h-1zM573 751h1v1h-1zM583 751h1v1h-1zM593 751h1v1h-1zM603 751h1v1h-1zM613 751h1v1h-1zM623 751h1v1h-1zM633 751h1v1h-1zM643 751h1v1h-1zM653 751h1v1h-1zM664 751h1v1h-1zM674 751h1v1h-1zM684 751h1v1h-1zM694 751h1v1h-1zM704 751h1v1h-1zM714 751h1v1h-1zM724 751h1v1h-1zM734 751h1v1h-1zM744 751h1v1h-1zM754 751h1v1h-1zM764 751h1v1h-1zM774 751h1v1h-1zM785 751h1v1h-1zM795 751h1v1h-1zM805 751h1v1h-1zM815 751h1v1h-1zM825 751h1v1h-1zM835 751h1v1h-1zM845 751h1v1h-1zM855 751h1v1h-1zM865 751h1v1h-1zM875 751h1v1h-1zM885 751h1v1h-1zM895 751h1v1h-1zM905 751h1v1h-1zM916 751h1v1h-1zM926 751h1v1h-1zM936 751h1v1h-1zM946 751h1v1h-1zM956 751h1v1h-1zM966 751h1v1h-1zM976 751h1v1h-1zM986 751h1v1h-1zM996 751h1v1h-1zM1006 751h1v1h-1zM1016 751h1v1h-1zM1026 751h1v1h-1zM1037 751h1v1h-1zM1047 751h1v1h-1zM1057 751h1v1h-1zM1067 751h1v1h-1zM1077 751h1v1h-1zM1087 751h1v1h-1zM1097 751h1v1h-1zM1107 751h1v1h-1zM1117 751h1v1h-1zM1127 751h1v1h-1zM1137 751h1v1h-1zM1147 751h1v1h-1zM1158 751h1v1h-1zM1168 751h1v1h-1zM8 761h1v1h-1zM18 761h1v1h-1zM28 761h1v1h-1zM38 761h1v1h-1zM49 761h1v1h-1zM59 761h1v1h-1zM69 761h1v1h-1zM79 761h1v1h-1zM89 761h1v1h-1zM99 761h1v1h-1zM109 761h1v1h-1zM119 761h1v1h-1zM129 761h1v1h-1zM139 761h1v1h-1zM149 761h1v1h-1zM159 761h1v1h-1zM170 761h1v1h-1zM180 761h1v1h-1zM190 761h1v1h-1zM200 761h1v1h-1zM210 761h1v1h-1zM220 761h1v1h-1zM230 761h1v1h-1zM240 761h1v1h-1zM250 761h1v1h-1zM260 761h1v1h-1zM270 761h1v1h-1zM280 761h1v1h-1zM290 761h1v1h-1zM301 761h1v1h-1zM311 761h1v1h-1zM321 761h1v1h-1zM331 761h1v1h-1zM341 761h1v1h-1zM351 761h1v1h-1zM361 761h1v1h-1zM371 761h1v1h-1zM381 761h1v1h-1zM391 761h1v1h-1zM401 761h1v1h-1zM411 761h1v1h-1zM422 761h1v1h-1zM432 761h1v1h-1zM442 761h1v1h-1zM452 761h1v1h-1zM462 761h1v1h-1zM472 761h1v1h-1zM482 761h1v1h-1zM492 761h1v1h-1zM502 761h1v1h-1zM512 761h1v1h-1zM522 761h1v1h-1zM532 761h1v1h-1zM543 761h1v1h-1zM553 761h1v1h-1zM563 761h1v1h-1zM573 761h1v1h-1zM583 761h1v1h-1zM593 761h1v1h-1zM603 761h1v1h-1zM613 761h1v1h-1zM623 761h1v1h-1zM633 761h1v1h-1zM643 761h1v1h-1zM653 761h1v1h-1zM664 761h1v1h-1zM674 761h1v1h-1zM684 761h1v1h-1zM694 761h1v1h-1zM704 761h1v1h-1zM714 761h1v1h-1zM724 761h1v1h-1zM734 761h1v1h-1zM744 761h1v1h-1zM754 761h1v1h-1zM764 761h1v1h-1zM774 761h1v1h-1zM785 761h1v1h-1zM795 761h1v1h-1zM805 761h1v1h-1zM815 761h1v1h-1zM825 761h1v1h-1zM835 761h1v1h-1zM845 761h1v1h-1zM855 761h1v1h-1zM865 761h1v1h-1zM875 761h1v1h-1zM885 761h1v1h-1zM895 761h1v1h-1zM905 761h1v1h-1zM916 761h1v1h-1zM926 761h1v1h-1zM936 761h1v1h-1zM946 761h1v1h-1zM956 761h1v1h-1zM966 761h1v1h-1zM976 761h1v1h-1zM986 761h1v1h-1zM996 761h1v1h-1zM1006 761h1v1h-1zM1016 761h1v1h-1zM1026 761h1v1h-1zM1037 761h1v1h-1zM1047 761h1v1h-1zM1057 761h1v1h-1zM1067 761h1v1h-1zM1077 761h1v1h-1zM1087 761h1v1h-1zM1097 761h1v1h-1zM1107 761h1v1h-1zM1117 761h1v1h-1zM1127 761h1v1h-1zM1137 761h1v1h-1zM1147 761h1v1h-1zM1158 761h1v1h-1zM1168 761h1v1h-1zM8 771h1v1h-1zM18 771h1v1h-1zM28 771h1v1h-1zM38 771h1v1h-1zM49 771h1v1h-1zM59 771h1v1h-1zM69 771h1v1h-1zM79 771h1v1h-1zM89 771h1v1h-1zM99 771h1v1h-1zM109 771h1v1h-1zM119 771h1v1h-1zM129 771h1v1h-1zM139 771h1v1h-1zM149 771h1v1h-1zM159 771h1v1h-1zM170 771h1v1h-1zM180 771h1v1h-1zM190 771h1v1h-1zM200 771h1v1h-1zM210 771h1v1h-1zM220 771h1v1h-1zM230 771h1v1h-1zM240 771h1v1h-1zM250 771h1v1h-1zM260 771h1v1h-1zM270 771h1v1h-1zM280 771h1v1h-1zM290 771h1v1h-1zM301 771h1v1h-1zM311 771h1v1h-1zM321 771h1v1h-1zM331 771h1v1h-1zM341 771h1v1h-1zM351 771h1v1h-1zM361 771h1v1h-1zM371 771h1v1h-1zM381 771h1v1h-1zM391 771h1v1h-1zM401 771h1v1h-1zM411 771h1v1h-1zM422 771h1v1h-1zM432 771h1v1h-1zM442 771h1v1h-1zM452 771h1v1h-1zM462 771h1v1h-1zM472 771h1v1h-1zM482 771h1v1h-1zM492 771h1v1h-1zM502 771h1v1h-1zM512 771h1v1h-1zM522 771h1v1h-1zM532 771h1v1h-1zM543 771h1v1h-1zM553 771h1v1h-1zM563 771h1v1h-1zM573 771h1v1h-1zM583 771h1v1h-1zM593 771h1v1h-1zM603 771h1v1h-1zM613 771h1v1h-1zM623 771h1v1h-1zM633 771h1v1h-1zM643 771h1v1h-1zM653 771h1v1h-1zM664 771h1v1h-1zM674 771h1v1h-1zM684 771h1v1h-1zM694 771h1v1h-1zM704 771h1v1h-1zM714 771h1v1h-1zM724 771h1v1h-1zM734 771h1v1h-1zM744 771h1v1h-1zM754 771h1v1h-1zM764 771h1v1h-1zM774 771h1v1h-1zM785 771h1v1h-1zM795 771h1v1h-1zM805 771h1v1h-1zM815 771h1v1h-1zM825 771h1v1h-1zM835 771h1v1h-1zM845 771h1v1h-1zM855 771h1v1h-1zM865 771h1v1h-1zM875 771h1v1h-1zM885 771h1v1h-1zM895 771h1v1h-1zM905 771h1v1h-1zM916 771h1v1h-1zM926 771h1v1h-1zM936 771h1v1h-1zM946 771h1v1h-1zM956 771h1v1h-1zM966 771h1v1h-1zM976 771h1v1h-1zM986 771h1v1h-1zM996 771h1v1h-1zM1006 771h1v1h-1zM1016 771h1v1h-1zM1026 771h1v1h-1zM1037 771h1v1h-1zM1047 771h1v1h-1zM1057 771h1v1h-1zM1067 771h1v1h-1zM1077 771h1v1h-1zM1087 771h1v1h-1zM1097 771h1v1h-1zM1107 771h1v1h-1zM1117 771h1v1h-1zM1127 771h1v1h-1zM1137 771h1v1h-1zM1147 771h1v1h-1zM1158 771h1v1h-1zM1168 771h1v1h-1zM8 781h1v1h-1zM18 781h1v1h-1zM28 781h1v1h-1zM38 781h1v1h-1zM49 781h1v1h-1zM59 781h1v1h-1zM69 781h1v1h-1zM79 781h1v1h-1zM89 781h1v1h-1zM99 781h1v1h-1zM109 781h1v1h-1zM119 781h1v1h-1zM129 781h1v1h-1zM139 781h1v1h-1zM149 781h1v1h-1zM159 781h1v1h-1zM170 781h1v1h-1zM180 781h1v1h-1zM190 781h1v1h-1zM200 781h1v1h-1zM210 781h1v1h-1zM220 781h1v1h-1zM230 781h1v1h-1zM240 781h1v1h-1zM250 781h1v1h-1zM260 781h1v1h-1zM270 781h1v1h-1zM280 781h1v1h-1zM290 781h1v1h-1zM301 781h1v1h-1zM311 781h1v1h-1zM321 781h1v1h-1zM331 781h1v1h-1zM341 781h1v1h-1zM351 781h1v1h-1zM361 781h1v1h-1zM371 781h1v1h-1zM381 781h1v1h-1zM391 781h1v1h-1zM401 781h1v1h-1zM411 781h1v1h-1zM422 781h1v1h-1zM432 781h1v1h-1zM442 781h1v1h-1zM452 781h1v1h-1zM462 781h1v1h-1zM472 781h1v1h-1zM482 781h1v1h-1zM492 781h1v1h-1zM502 781h1v1h-1zM512 781h1v1h-1zM522 781h1v1h-1zM532 781h1v1h-1zM543 781h1v1h-1zM553 781h1v1h-1zM563 781h1v1h-1zM573 781h1v1h-1zM583 781h1v1h-1zM593 781h1v1h-1zM603 781h1v1h-1zM613 781h1v1h-1zM623 781h1v1h-1zM633 781h1v1h-1zM643 781h1v1h-1zM653 781h1v1h-1zM664 781h1v1h-1zM674 781h1v1h-1zM684 781h1v1h-1zM694 781h1v1h-1zM704 781h1v1h-1zM714 781h1v1h-1zM724 781h1v1h-1zM734 781h1v1h-1zM744 781h1v1h-1zM754 781h1v1h-1zM764 781h1v1h-1zM774 781h1v1h-1zM785 781h1v1h-1zM795 781h1v1h-1zM805 781h1v1h-1zM815 781h1v1h-1zM825 781h1v1h-1zM835 781h1v1h-1zM845 781h1v1h-1zM855 781h1v1h-1zM865 781h1v1h-1zM875 781h1v1h-1zM885 781h1v1h-1zM895 781h1v1h-1zM905 781h1v1h-1zM916 781h1v1h-1zM926 781h1v1h-1zM936 781h1v1h-1zM946 781h1v1h-1zM956 781h1v1h-1zM966 781h1v1h-1zM976 781h1v1h-1zM986 781h1v1h-1zM996 781h1v1h-1zM1006 781h1v1h-1zM1016 781h1v1h-1zM1026 781h1v1h-1zM1037 781h1v1h-1zM1047 781h1v1h-1zM1057 781h1v1h-1zM1067 781h1v1h-1zM1077 781h1v1h-1zM1087 781h1v1h-1zM1097 781h1v1h-1zM1107 781h1v1h-1zM1117 781h1v1h-1zM1127 781h1v1h-1zM1137 781h1v1h-1zM1147 781h1v1h-1zM1158 781h1v1h-1zM1168 781h1v1h-1zM8 791h1v1h-1zM18 791h1v1h-1zM28 791h1v1h-1zM38 791h1v1h-1zM49 791h1v1h-1zM59 791h1v1h-1zM69 791h1v1h-1zM79 791h1v1h-1zM89 791h1v1h-1zM99 791h1v1h-1zM109 791h1v1h-1zM119 791h1v1h-1zM129 791h1v1h-1zM139 791h1v1h-1zM149 791h1v1h-1zM159 791h1v1h-1zM170 791h1v1h-1zM180 791h1v1h-1zM190 791h1v1h-1zM200 791h1v1h-1zM210 791h1v1h-1zM220 791h1v1h-1zM230 791h1v1h-1zM240 791h1v1h-1zM250 791h1v1h-1zM260 791h1v1h-1zM270 791h1v1h-1zM280 791h1v1h-1zM290 791h1v1h-1zM301 791h1v1h-1zM311 791h1v1h-1zM321 791h1v1h-1zM331 791h1v1h-1zM341 791h1v1h-1zM351 791h1v1h-1zM361 791h1v1h-1zM371 791h1v1h-1zM381 791h1v1h-1zM391 791h1v1h-1zM401 791h1v1h-1zM411 791h1v1h-1zM422 791h1v1h-1zM432 791h1v1h-1zM442 791h1v1h-1zM452 791h1v1h-1zM462 791h1v1h-1zM472 791h1v1h-1zM482 791h1v1h-1zM492 791h1v1h-1zM502 791h1v1h-1zM512 791h1v1h-1zM522 791h1v1h-1zM532 791h1v1h-1zM543 791h1v1h-1zM553 791h1v1h-1zM563 791h1v1h-1zM573 791h1v1h-1zM583 791h1v1h-1zM593 791h1v1h-1zM603 791h1v1h-1zM613 791h1v1h-1zM623 791h1v1h-1zM633 791h1v1h-1zM643 791h1v1h-1zM653 791h1v1h-1zM664 791h1v1h-1zM674 791h1v1h-1zM684 791h1v1h-1zM694 791h1v1h-1zM704 791h1v1h-1zM714 791h1v1h-1zM724 791h1v1h-1zM734 791h1v1h-1zM744 791h1v1h-1zM754 791h1v1h-1zM764 791h1v1h-1zM774 791h1v1h-1zM785 791h1v1h-1zM795 791h1v1h-1zM805 791h1v1h-1zM815 791h1v1h-1zM825 791h1v1h-1zM835 791h1v1h-1zM845 791h1v1h-1zM855 791h1v1h-1zM865 791h1v1h-1zM875 791h1v1h-1zM885 791h1v1h-1zM895 791h1v1h-1zM905 791h1v1h-1zM916 791h1v1h-1zM926 791h1v1h-1zM936 791h1v1h-1zM946 791h1v1h-1zM956 791h1v1h-1zM966 791h1v1h-1zM976 791h1v1h-1zM986 791h1v1h-1zM996 791h1v1h-1zM1006 791h1v1h-1zM1016 791h1v1h-1zM1026 791h1v1h-1zM1037 791h1v1h-1zM1047 791h1v1h-1zM1057 791h1v1h-1zM1067 791h1v1h-1zM1077 791h1v1h-1zM1087 791h1v1h-1zM1097 791h1v1h-1zM1107 791h1v1h-1zM1117 791h1v1h-1zM1127 791h1v1h-1zM1137 791h1v1h-1zM1147 791h1v1h-1zM1158 791h1v1h-1zM1168 791h1v1h-1zM8 801h1v1h-1zM18 801h1v1h-1zM28 801h1v1h-1zM38 801h1v1h-1zM49 801h1v1h-1zM59 801h1v1h-1zM69 801h1v1h-1zM79 801h1v1h-1zM89 801h1v1h-1zM99 801h1v1h-1zM109 801h1v1h-1zM119 801h1v1h-1zM129 801h1v1h-1zM139 801h1v1h-1zM149 801h1v1h-1zM159 801h1v1h-1zM170 801h1v1h-1zM180 801h1v1h-1zM190 801h1v1h-1zM200 801h1v1h-1zM210 801h1v1h-1zM220 801h1v1h-1zM230 801h1v1h-1zM240 801h1v1h-1zM250 801h1v1h-1zM260 801h1v1h-1zM270 801h1v1h-1zM280 801h1v1h-1zM290 801h1v1h-1zM301 801h1v1h-1zM311 801h1v1h-1zM321 801h1v1h-1zM331 801h1v1h-1zM341 801h1v1h-1zM351 801h1v1h-1zM361 801h1v1h-1zM371 801h1v1h-1zM381 801h1v1h-1zM391 801h1v1h-1zM401 801h1v1h-1zM411 801h1v1h-1zM422 801h1v1h-1zM432 801h1v1h-1zM442 801h1v1h-1zM452 801h1v1h-1zM462 801h1v1h-1zM472 801h1v1h-1zM482 801h1v1h-1zM492 801h1v1h-1zM502 801h1v1h-1zM512 801h1v1h-1zM522 801h1v1h-1zM532 801h1v1h-1zM543 801h1v1h-1zM553 801h1v1h-1zM563 801h1v1h-1zM573 801h1v1h-1zM583 801h1v1h-1zM593 801h1v1h-1zM603 801h1v1h-1zM613 801h1v1h-1zM623 801h1v1h-1zM633 801h1v1h-1zM643 801h1v1h-1zM653 801h1v1h-1zM664 801h1v1h-1zM674 801h1v1h-1zM684 801h1v1h-1zM694 801h1v1h-1zM704 801h1v1h-1zM714 801h1v1h-1zM724 801h1v1h-1zM734 801h1v1h-1zM744 801h1v1h-1zM754 801h1v1h-1zM764 801h1v1h-1zM774 801h1v1h-1zM785 801h1v1h-1zM795 801h1v1h-1zM805 801h1v1h-1zM815 801h1v1h-1zM825 801h1v1h-1zM835 801h1v1h-1zM845 801h1v1h-1zM855 801h1v1h-1zM865 801h1v1h-1zM875 801h1v1h-1zM885 801h1v1h-1zM895 801h1v1h-1zM905 801h1v1h-1zM916 801h1v1h-1zM926 801h1v1h-1zM936 801h1v1h-1zM946 801h1v1h-1zM956 801h1v1h-1zM966 801h1v1h-1zM976 801h1v1h-1zM986 801h1v1h-1zM996 801h1v1h-1zM1006 801h1v1h-1zM1016 801h1v1h-1zM1026 801h1v1h-1zM1037 801h1v1h-1zM1047 801h1v1h-1zM1057 801h1v1h-1zM1067 801h1v1h-1zM1077 801h1v1h-1zM1087 801h1v1h-1zM1097 801h1v1h-1zM1107 801h1v1h-1zM1117 801h1v1h-1zM1127 801h1v1h-1zM1137 801h1v1h-1zM1147 801h1v1h-1zM1158 801h1v1h-1zM1168 801h1v1h-1zM8 812h1v1h-1zM18 812h1v1h-1zM28 812h1v1h-1zM38 812h1v1h-1zM49 812h1v1h-1zM59 812h1v1h-1zM69 812h1v1h-1zM79 812h1v1h-1zM89 812h1v1h-1zM99 812h1v1h-1zM109 812h1v1h-1zM119 812h1v1h-1zM129 812h1v1h-1zM139 812h1v1h-1zM149 812h1v1h-1zM159 812h1v1h-1zM170 812h1v1h-1zM180 812h1v1h-1zM190 812h1v1h-1zM200 812h1v1h-1zM210 812h1v1h-1zM220 812h1v1h-1zM230 812h1v1h-1zM240 812h1v1h-1zM250 812h1v1h-1zM260 812h1v1h-1zM270 812h1v1h-1zM280 812h1v1h-1zM290 812h1v1h-1zM301 812h1v1h-1zM311 812h1v1h-1zM321 812h1v1h-1zM331 812h1v1h-1zM341 812h1v1h-1zM351 812h1v1h-1zM361 812h1v1h-1zM371 812h1v1h-1zM381 812h1v1h-1zM391 812h1v1h-1zM401 812h1v1h-1zM411 812h1v1h-1zM422 812h1v1h-1zM432 812h1v1h-1zM442 812h1v1h-1zM452 812h1v1h-1zM462 812h1v1h-1zM472 812h1v1h-1zM482 812h1v1h-1zM492 812h1v1h-1zM502 812h1v1h-1zM512 812h1v1h-1zM522 812h1v1h-1zM532 812h1v1h-1zM543 812h1v1h-1zM553 812h1v1h-1zM563 812h1v1h-1zM573 812h1v1h-1zM583 812h1v1h-1zM593 812h1v1h-1zM603 812h1v1h-1zM613 812h1v1h-1zM623 812h1v1h-1zM633 812h1v1h-1zM643 812h1v1h-1zM653 812h1v1h-1zM664 812h1v1h-1zM674 812h1v1h-1zM684 812h1v1h-1zM694 812h1v1h-1zM704 812h1v1h-1zM714 812h1v1h-1zM724 812h1v1h-1zM734 812h1v1h-1zM744 812h1v1h-1zM754 812h1v1h-1zM764 812h1v1h-1zM774 812h1v1h-1zM785 812h1v1h-1zM795 812h1v1h-1zM805 812h1v1h-1zM815 812h1v1h-1zM825 812h1v1h-1zM835 812h1v1h-1zM845 812h1v1h-1zM855 812h1v1h-1zM865 812h1v1h-1zM875 812h1v1h-1zM885 812h1v1h-1zM895 812h1v1h-1zM905 812h1v1h-1zM916 812h1v1h-1zM926 812h1v1h-1zM936 812h1v1h-1zM946 812h1v1h-1zM956 812h1v1h-1zM966 812h1v1h-1zM976 812h1v1h-1zM986 812h1v1h-1zM996 812h1v1h-1zM1006 812h1v1h-1zM1016 812h1v1h-1zM1026 812h1v1h-1zM1037 812h1v1h-1zM1047 812h1v1h-1zM1057 812h1v1h-1zM1067 812h1v1h-1zM1077 812h1v1h-1zM1087 812h1v1h-1zM1097 812h1v1h-1zM1107 812h1v1h-1zM1117 812h1v1h-1zM1127 812h1v1h-1zM1137 812h1v1h-1zM1147 812h1v1h-1zM1158 812h1v1h-1zM1168 812h1v1h-1zM8 822h1v1h-1zM18 822h1v1h-1zM28 822h1v1h-1zM38 822h1v1h-1zM49 822h1v1h-1zM59 822h1v1h-1zM69 822h1v1h-1zM79 822h1v1h-1zM89 822h1v1h-1zM99 822h1v1h-1zM109 822h1v1h-1zM119 822h1v1h-1zM129 822h1v1h-1zM139 822h1v1h-1zM149 822h1v1h-1zM159 822h1v1h-1zM170 822h1v1h-1zM180 822h1v1h-1zM190 822h1v1h-1zM200 822h1v1h-1zM210 822h1v1h-1zM220 822h1v1h-1zM230 822h1v1h-1zM240 822h1v1h-1zM250 822h1v1h-1zM260 822h1v1h-1zM270 822h1v1h-1zM280 822h1v1h-1zM290 822h1v1h-1zM301 822h1v1h-1zM311 822h1v1h-1zM321 822h1v1h-1zM331 822h1v1h-1zM341 822h1v1h-1zM351 822h1v1h-1zM361 822h1v1h-1zM371 822h1v1h-1zM381 822h1v1h-1zM391 822h1v1h-1zM401 822h1v1h-1zM411 822h1v1h-1zM422 822h1v1h-1zM432 822h1v1h-1zM442 822h1v1h-1zM452 822h1v1h-1zM462 822h1v1h-1zM472 822h1v1h-1zM482 822h1v1h-1zM492 822h1v1h-1zM502 822h1v1h-1zM512 822h1v1h-1zM522 822h1v1h-1zM532 822h1v1h-1zM543 822h1v1h-1zM553 822h1v1h-1zM563 822h1v1h-1zM573 822h1v1h-1zM583 822h1v1h-1zM593 822h1v1h-1zM603 822h1v1h-1zM613 822h1v1h-1zM623 822h1v1h-1zM633 822h1v1h-1zM643 822h1v1h-1zM653 822h1v1h-1zM664 822h1v1h-1zM674 822h1v1h-1zM684 822h1v1h-1zM694 822h1v1h-1zM704 822h1v1h-1zM714 822h1v1h-1zM724 822h1v1h-1zM734 822h1v1h-1zM744 822h1v1h-1zM754 822h1v1h-1zM764 822h1v1h-1zM774 822h1v1h-1zM785 822h1v1h-1zM795 822h1v1h-1zM805 822h1v1h-1zM815 822h1v1h-1zM825 822h1v1h-1zM835 822h1v1h-1zM845 822h1v1h-1zM855 822h1v1h-1zM865 822h1v1h-1zM875 822h1v1h-1zM885 822h1v1h-1zM895 822h1v1h-1zM905 822h1v1h-1zM916 822h1v1h-1zM926 822h1v1h-1zM936 822h1v1h-1zM946 822h1v1h-1zM956 822h1v1h-1zM966 822h1v1h-1zM976 822h1v1h-1zM986 822h1v1h-1zM996 822h1v1h-1zM1006 822h1v1h-1zM1016 822h1v1h-1zM1026 822h1v1h-1zM1037 822h1v1h-1zM1047 822h1v1h-1zM1057 822h1v1h-1zM1067 822h1v1h-1zM1077 822h1v1h-1zM1087 822h1v1h-1zM1097 822h1v1h-1zM1107 822h1v1h-1zM1117 822h1v1h-1zM1127 822h1v1h-1zM1137 822h1v1h-1zM1147 822h1v1h-1zM1158 822h1v1h-1zM1168 822h1v1h-1zM8 832h1v1h-1zM18 832h1v1h-1zM28 832h1v1h-1zM38 832h1v1h-1zM49 832h1v1h-1zM59 832h1v1h-1zM69 832h1v1h-1zM79 832h1v1h-1zM89 832h1v1h-1zM99 832h1v1h-1zM109 832h1v1h-1zM119 832h1v1h-1zM129 832h1v1h-1zM139 832h1v1h-1zM149 832h1v1h-1zM159 832h1v1h-1zM170 832h1v1h-1zM180 832h1v1h-1zM190 832h1v1h-1zM200 832h1v1h-1zM210 832h1v1h-1zM220 832h1v1h-1zM230 832h1v1h-1zM240 832h1v1h-1zM250 832h1v1h-1zM260 832h1v1h-1zM270 832h1v1h-1zM280 832h1v1h-1zM290 832h1v1h-1zM301 832h1v1h-1zM311 832h1v1h-1zM321 832h1v1h-1zM331 832h1v1h-1zM341 832h1v1h-1zM351 832h1v1h-1zM361 832h1v1h-1zM371 832h1v1h-1zM381 832h1v1h-1zM391 832h1v1h-1zM401 832h1v1h-1zM411 832h1v1h-1zM422 832h1v1h-1zM432 832h1v1h-1zM442 832h1v1h-1zM452 832h1v1h-1zM462 832h1v1h-1zM472 832h1v1h-1zM482 832h1v1h-1zM492 832h1v1h-1zM502 832h1v1h-1zM512 832h1v1h-1zM522 832h1v1h-1zM532 832h1v1h-1zM543 832h1v1h-1zM553 832h1v1h-1zM563 832h1v1h-1zM573 832h1v1h-1zM583 832h1v1h-1zM593 832h1v1h-1zM603 832h1v1h-1zM613 832h1v1h-1zM623 832h1v1h-1zM633 832h1v1h-1zM643 832h1v1h-1zM653 832h1v1h-1zM664 832h1v1h-1zM674 832h1v1h-1zM684 832h1v1h-1zM694 832h1v1h-1zM704 832h1v1h-1zM714 832h1v1h-1zM724 832h1v1h-1zM734 832h1v1h-1zM744 832h1v1h-1zM754 832h1v1h-1zM764 832h1v1h-1zM774 832h1v1h-1zM785 832h1v1h-1zM795 832h1v1h-1zM805 832h1v1h-1zM815 832h1v1h-1zM825 832h1v1h-1zM835 832h1v1h-1zM845 832h1v1h-1zM855 832h1v1h-1zM865 832h1v1h-1zM875 832h1v1h-1zM885 832h1v1h-1zM895 832h1v1h-1zM905 832h1v1h-1zM916 832h1v1h-1zM926 832h1v1h-1zM936 832h1v1h-1zM946 832h1v1h-1zM956 832h1v1h-1zM966 832h1v1h-1zM976 832h1v1h-1zM986 832h1v1h-1zM996 832h1v1h-1zM1006 832h1v1h-1zM1016 832h1v1h-1zM1026 832h1v1h-1zM1037 832h1v1h-1zM1047 832h1v1h-1zM1057 832h1v1h-1zM1067 832h1v1h-1zM1077 832h1v1h-1zM1087 832h1v1h-1zM1097 832h1v1h-1zM1107 832h1v1h-1zM1117 832h1v1h-1zM1127 832h1v1h-1zM1137 832h1v1h-1zM1147 832h1v1h-1zM1158 832h1v1h-1zM1168 832h1v1h-1zM8 842h1v1h-1zM18 842h1v1h-1zM28 842h1v1h-1zM38 842h1v1h-1zM49 842h1v1h-1zM59 842h1v1h-1zM69 842h1v1h-1zM79 842h1v1h-1zM89 842h1v1h-1zM99 842h1v1h-1zM109 842h1v1h-1zM119 842h1v1h-1zM129 842h1v1h-1zM139 842h1v1h-1zM149 842h1v1h-1zM159 842h1v1h-1zM170 842h1v1h-1zM180 842h1v1h-1zM190 842h1v1h-1zM200 842h1v1h-1zM210 842h1v1h-1zM220 842h1v1h-1zM230 842h1v1h-1zM240 842h1v1h-1zM250 842h1v1h-1zM260 842h1v1h-1zM270 842h1v1h-1zM280 842h1v1h-1zM290 842h1v1h-1zM301 842h1v1h-1zM311 842h1v1h-1zM321 842h1v1h-1zM331 842h1v1h-1zM341 842h1v1h-1zM351 842h1v1h-1zM361 842h1v1h-1zM371 842h1v1h-1zM381 842h1v1h-1zM391 842h1v1h-1zM401 842h1v1h-1zM411 842h1v1h-1zM422 842h1v1h-1zM432 842h1v1h-1zM442 842h1v1h-1zM452 842h1v1h-1zM462 842h1v1h-1zM472 842h1v1h-1zM482 842h1v1h-1zM492 842h1v1h-1zM502 842h1v1h-1zM512 842h1v1h-1zM522 842h1v1h-1zM532 842h1v1h-1zM543 842h1v1h-1zM553 842h1v1h-1zM563 842h1v1h-1zM573 842h1v1h-1zM583 842h1v1h-1zM593 842h1v1h-1zM603 842h1v1h-1zM613 842h1v1h-1zM623 842h1v1h-1zM633 842h1v1h-1zM643 842h1v1h-1zM653 842h1v1h-1zM664 842h1v1h-1zM674 842h1v1h-1zM684 842h1v1h-1zM694 842h1v1h-1zM704 842h1v1h-1zM714 842h1v1h-1zM724 842h1v1h-1zM734 842h1v1h-1zM744 842h1v1h-1zM754 842h1v1h-1zM764 842h1v1h-1zM774 842h1v1h-1zM785 842h1v1h-1zM795 842h1v1h-1zM805 842h1v1h-1zM815 842h1v1h-1zM825 842h1v1h-1zM835 842h1v1h-1zM845 842h1v1h-1zM855 842h1v1h-1zM865 842h1v1h-1zM875 842h1v1h-1zM885 842h1v1h-1zM895 842h1v1h-1zM905 842h1v1h-1zM916 842h1v1h-1zM926 842h1v1h-1zM936 842h1v1h-1zM946 842h1v1h-1zM956 842h1v1h-1zM966 842h1v1h-1zM976 842h1v1h-1zM986 842h1v1h-1zM996 842h1v1h-1zM1006 842h1v1h-1zM1016 842h1v1h-1zM1026 842h1v1h-1zM1037 842h1v1h-1zM1047 842h1v1h-1zM1057 842h1v1h-1zM1067 842h1v1h-1zM1077 842h1v1h-1zM1087 842h1v1h-1zM1097 842h1v1h-1zM1107 842h1v1h-1zM1117 842h1v1h-1zM1127 842h1v1h-1zM1137 842h1v1h-1zM1147 842h1v1h-1zM1158 842h1v1h-1zM1168 842h1v1h-1zM8 852h1v1h-1zM18 852h1v1h-1zM28 852h1v1h-1zM38 852h1v1h-1zM49 852h1v1h-1zM59 852h1v1h-1zM69 852h1v1h-1zM79 852h1v1h-1zM89 852h1v1h-1zM99 852h1v1h-1zM109 852h1v1h-1zM119 852h1v1h-1zM129 852h1v1h-1zM139 852h1v1h-1zM149 852h1v1h-1zM159 852h1v1h-1zM170 852h1v1h-1zM180 852h1v1h-1zM190 852h1v1h-1zM200 852h1v1h-1zM210 852h1v1h-1zM220 852h1v1h-1zM230 852h1v1h-1zM240 852h1v1h-1zM250 852h1v1h-1zM260 852h1v1h-1zM270 852h1v1h-1zM280 852h1v1h-1zM290 852h1v1h-1zM301 852h1v1h-1zM311 852h1v1h-1zM321 852h1v1h-1zM331 852h1v1h-1zM341 852h1v1h-1zM351 852h1v1h-1zM361 852h1v1h-1zM371 852h1v1h-1zM381 852h1v1h-1zM391 852h1v1h-1zM401 852h1v1h-1zM411 852h1v1h-1zM422 852h1v1h-1zM432 852h1v1h-1zM442 852h1v1h-1zM452 852h1v1h-1zM462 852h1v1h-1zM472 852h1v1h-1zM482 852h1v1h-1zM492 852h1v1h-1zM502 852h1v1h-1zM512 852h1v1h-1zM522 852h1v1h-1zM532 852h1v1h-1zM543 852h1v1h-1zM553 852h1v1h-1zM563 852h1v1h-1zM573 852h1v1h-1zM583 852h1v1h-1zM593 852h1v1h-1zM603 852h1v1h-1zM613 852h1v1h-1zM623 852h1v1h-1zM633 852h1v1h-1zM643 852h1v1h-1zM653 852h1v1h-1zM664 852h1v1h-1zM674 852h1v1h-1zM684 852h1v1h-1zM694 852h1v1h-1zM704 852h1v1h-1zM714 852h1v1h-1zM724 852h1v1h-1zM734 852h1v1h-1zM744 852h1v1h-1zM754 852h1v1h-1zM764 852h1v1h-1zM774 852h1v1h-1zM785 852h1v1h-1zM795 852h1v1h-1zM805 852h1v1h-1zM815 852h1v1h-1zM825 852h1v1h-1zM835 852h1v1h-1zM845 852h1v1h-1zM855 852h1v1h-1zM865 852h1v1h-1zM875 852h1v1h-1zM885 852h1v1h-1zM895 852h1v1h-1zM905 852h1v1h-1zM916 852h1v1h-1zM926 852h1v1h-1zM936 852h1v1h-1zM946 852h1v1h-1zM956 852h1v1h-1zM966 852h1v1h-1zM976 852h1v1h-1zM986 852h1v1h-1zM996 852h1v1h-1zM1006 852h1v1h-1zM1016 852h1v1h-1zM1026 852h1v1h-1zM1037 852h1v1h-1zM1047 852h1v1h-1zM1057 852h1v1h-1zM1067 852h1v1h-1zM1077 852h1v1h-1zM1087 852h1v1h-1zM1097 852h1v1h-1zM1107 852h1v1h-1zM1117 852h1v1h-1zM1127 852h1v1h-1zM1137 852h1v1h-1zM1147 852h1v1h-1zM1158 852h1v1h-1zM1168 852h1v1h-1z"/>
<clipPath id="sc"><rect x="2" y="692" width="1172" height="168"/></clipPath>
<g clip-path="url(#sc)">
<g shape-rendering="crispEdges">
<rect x="327.5" y="711.5" width="100" height="85" fill="none" stroke="#0000c8" stroke-dasharray="3 3"/>
<rect x="437.5" y="696.5" width="378" height="141" fill="none" stroke="#0000c8" stroke-dasharray="3 3"/>
<rect x="492.5" y="711.5" width="51" height="65" fill="none" stroke="#0000c8" stroke-dasharray="3 3"/>
<rect x="442.5" y="751.5" width="45" height="66" fill="none" stroke="#0000c8" stroke-dasharray="3 3"/>
<rect x="361" y="731" width="1" height="24" fill="#0000ff"/>
<rect x="361" y="731" width="29" height="1" fill="#0000ff"/>
<circle cx="361.5" cy="763.5" r="9.5" fill="none" stroke="#000080"/>
<rect x="358" y="757" width="7" height="1" fill="#000080"/>
<rect x="361" y="754" width="1" height="7" fill="#000080"/>
<rect x="358" y="770" width="7" height="1" fill="#000080"/>
<rect x="361" y="773" width="1" height="19" fill="#0000ff"/>
<polygon points="355.5,791.5 367.5,791.5 361.5,798.5" fill="none" stroke="#0000ff"/>
<polyline points="388.5,731.5 390.5,731.5 392.5,726.5 397.5,736.5 402.5,726.5 408.5,736.5 410.5,731.5" fill="none" stroke="#000080"/>
<rect x="410" y="731" width="90" height="1" fill="#0000ff"/>
<polyline points="498.5,731.5 500.5,731.5 502.5,726.5 507.5,736.5 512.5,726.5 518.5,736.5 520.5,731.5" fill="none" stroke="#000080"/>
<rect x="520" y="731" width="18" height="1" fill="#0000ff"/>
<rect x="537" y="731" width="1" height="26" fill="#0000ff"/>
<polyline points="498.5,756.5 500.5,756.5 502.5,751.5 507.5,761.5 512.5,751.5 518.5,761.5 520.5,756.5" fill="none" stroke="#000080"/>
<rect x="520" y="756" width="18" height="1" fill="#0000ff"/>
<rect x="472" y="756" width="28" height="1" fill="#0000ff"/>
<rect x="472" y="756" width="1" height="18" fill="#0000ff"/>
<circle cx="472.5" cy="782.5" r="9.5" fill="none" stroke="#000080"/>
<rect x="469" y="776" width="7" height="1" fill="#000080"/>
<rect x="472" y="773" width="1" height="7" fill="#000080"/>
<rect x="469" y="789" width="7" height="1" fill="#000080"/>
<rect x="472" y="792" width="1" height="22" fill="#0000ff"/>
<polygon points="466.5,813.5 478.5,813.5 472.5,820.5" fill="none" stroke="#0000ff"/>
<rect x="537" y="746" width="37" height="1" fill="#0000ff"/>
<rect x="536" y="745" width="3" height="3" fill="#0000ff"/>
<rect x="572" y="745" width="3" height="3" fill="#0000ff"/>
<rect x="573" y="711" width="1" height="76" fill="#0000ff"/>
<rect x="573" y="711" width="73" height="1" fill="#0000ff"/>
<rect x="612" y="710" width="3" height="3" fill="#0000ff"/>
<rect x="613" y="711" width="1" height="16" fill="#0000ff"/>
<polyline points="644.5,711.5 646.5,711.5 648.5,706.5 653.5,716.5 658.5,706.5 664.5,716.5 666.5,711.5" fill="none" stroke="#000080"/>
<rect x="666" y="711" width="74" height="1" fill="#0000ff"/>
<rect x="713" y="710" width="3" height="3" fill="#0000ff"/>
<rect x="714" y="711" width="1" height="11" fill="#0000ff"/>
<rect x="704" y="721" width="21" height="1" fill="#0000ff"/>
<rect x="704" y="756" width="21" height="1" fill="#0000ff"/>
<rect x="704" y="721" width="1" height="13" fill="#0000ff"/>
<rect x="704" y="733" width="1" height="8" fill="#000080"/>
<rect x="704" y="743" width="1" height="9" fill="#000080"/>
<rect x="704" y="752" width="1" height="5" fill="#0000ff"/>
<rect x="699" y="740" width="11" height="1" fill="#000080"/>
<rect x="699" y="743" width="11" height="1" fill="#000080"/>
<rect x="724" y="721" width="1" height="6" fill="#0000ff"/>
<rect x="724" y="751" width="1" height="6" fill="#0000ff"/>
<path d="M724.5,726.5 C731,727 731,733.333 724.5,734.833 C731,735.333 731,741.667 724.5,743.167 C731,743.667 731,750 724.5,751.5" fill="none" stroke="#000080"/>
<path d="M725,732.833 h-5 q-2,1.5 0,3 h5" fill="none" stroke="#000080"/>
<path d="M725,741.167 h-5 q-2,1.5 0,3 h5" fill="none" stroke="#000080"/>
<rect x="713" y="720" width="3" height="3" fill="#0000ff"/>
<rect x="713" y="755" width="3" height="3" fill="#0000ff"/>
<rect x="714" y="756" width="1" height="16" fill="#0000ff"/>
<polygon points="708.5,771.5 720.5,771.5 714.5,778.5" fill="none" stroke="#0000ff"/>
<rect x="573" y="786" width="8" height="1" fill="#0000ff"/>
<polygon points="580.5,781.5 587.5,786.5 580.5,791.5" fill="none" stroke="#000080"/>
<rect x="587" y="781" width="1" height="11" fill="#000080"/>
<rect x="587" y="786" width="59" height="1" fill="#0000ff"/>
<rect x="612" y="785" width="3" height="3" fill="#0000ff"/>
<rect x="613" y="771" width="1" height="16" fill="#0000ff"/>
<polyline points="644.5,786.5 646.5,786.5 648.5,781.5 653.5,791.5 658.5,781.5 664.5,791.5 666.5,786.5" fill="none" stroke="#000080"/>
<rect x="666" y="786" width="74" height="1" fill="#0000ff"/>
<rect x="713" y="785" width="3" height="3" fill="#0000ff"/>
<rect x="714" y="786" width="1" height="11" fill="#0000ff"/>
<rect x="704" y="796" width="21" height="1" fill="#0000ff"/>
<rect x="704" y="832" width="21" height="1" fill="#0000ff"/>
<rect x="704" y="796" width="1" height="13" fill="#0000ff"/>
<rect x="704" y="808" width="1" height="8" fill="#000080"/>
<rect x="704" y="818" width="1" height="9" fill="#000080"/>
<rect x="704" y="827" width="1" height="6" fill="#0000ff"/>
<rect x="699" y="815" width="11" height="1" fill="#000080"/>
<rect x="699" y="818" width="11" height="1" fill="#000080"/>
<rect x="724" y="796" width="1" height="6" fill="#0000ff"/>
<rect x="724" y="827" width="1" height="6" fill="#0000ff"/>
<path d="M724.5,801.5 C731,802 731,808.667 724.5,810.167 C731,810.667 731,817.333 724.5,818.833 C731,819.333 731,826 724.5,827.5" fill="none" stroke="#000080"/>
<path d="M725,808.167 h-5 q-2,1.5 0,3 h5" fill="none" stroke="#000080"/>
<path d="M725,816.833 h-5 q-2,1.5 0,3 h5" fill="none" stroke="#000080"/>
<rect x="713" y="795" width="3" height="3" fill="#0000ff"/>
<rect x="713" y="831" width="3" height="3" fill="#0000ff"/>
<rect x="714" y="832" width="1" height="16" fill="#0000ff"/>
<polygon points="708.5,847.5 720.5,847.5 714.5,854.5" fill="none" stroke="#0000ff"/>
</g>
<g font-family="Liberation Sans"><text x="365" y="704" fill="#1414dc" text-anchor="start" font-size="7px" font-weight="bold" >Sender</text>
<text x="505" y="708" fill="#1414dc" text-anchor="start" font-size="7px" font-weight="bold" >Addition</text>
<text x="452" y="748" fill="#1414dc" text-anchor="start" font-size="7px" font-weight="bold" >LO</text>
<text x="701" y="695" fill="#1414dc" text-anchor="start" font-size="7px" font-weight="bold" >Empfänger ZF</text>
<text x="724" y="763" fill="#1414dc" text-anchor="start" font-size="7px" font-weight="bold" >455 kHz</text>
<text x="724" y="839" fill="#1414dc" text-anchor="start" font-size="7px" font-weight="bold" >455 kHz</text>
<text x="394.5" y="724" fill="#000" text-anchor="start" font-size="7px" font-weight="bold" >R3</text>
<text x="386" y="740" fill="#000" text-anchor="start" font-size="7px" font-weight="bold" >1k</text>
<text x="369" y="752.5" fill="#000" text-anchor="start" font-size="7px" font-weight="bold" >V1</text>
<text x="329" y="780" fill="#000" text-anchor="start" font-size="7px" font-weight="bold" >SINE(0 10 1000k)</text>
<text x="391" y="814" fill="#000" text-anchor="start" font-size="7px" font-weight="bold" >.tran 0.03m</text>
<text x="450" y="773" fill="#000" text-anchor="start" font-size="7px" font-weight="bold" >LO</text>
<text x="463" y="829" fill="#000" text-anchor="start" font-size="7px" font-weight="bold" >SINE(0 10 1455k)</text>
<text x="515.5" y="728" fill="#000" text-anchor="start" font-size="7px" font-weight="bold" >100</text>
<text x="498" y="740" fill="#000" text-anchor="start" font-size="7px" font-weight="bold" >R1</text>
<text x="514.5" y="755" fill="#000" text-anchor="start" font-size="7px" font-weight="bold" >100</text>
<text x="498" y="766" fill="#000" text-anchor="start" font-size="7px" font-weight="bold" >R2</text>
<text x="548" y="744" fill="#000" text-anchor="start" font-size="7px" font-weight="bold" >K1</text>
<text x="651.5" y="704" fill="#000" text-anchor="start" font-size="7px" font-weight="bold" >R5</text>
<text x="648" y="722" fill="#000" text-anchor="start" font-size="7px" font-weight="bold" >100k</text>
<text x="578" y="779" fill="#000" text-anchor="start" font-size="7px" font-weight="bold" >D1</text>
<text x="580" y="797" fill="#000" text-anchor="start" font-size="7px" font-weight="bold" >D</text>
<text x="651.5" y="779" fill="#000" text-anchor="start" font-size="7px" font-weight="bold" >R6</text>
<text x="649.5" y="797" fill="#000" text-anchor="start" font-size="7px" font-weight="bold" >10k</text>
<text x="739" y="713.5" fill="#000" text-anchor="start" font-size="7px" font-weight="bold" >ZF_a</text>
<text x="739" y="789" fill="#000" text-anchor="start" font-size="7px" font-weight="bold" >ZF_b</text>
<text x="706" y="735" fill="#000" text-anchor="start" font-size="7px" font-weight="bold" >C1</text>
<text x="730" y="735" fill="#000" text-anchor="start" font-size="7px" font-weight="bold" >L1</text>
<text x="680" y="752" fill="#000" text-anchor="start" font-size="7px" font-weight="bold" >500pF</text>
<text x="730" y="748" fill="#000" text-anchor="start" font-size="7px" font-weight="bold" >243µH</text>
<text x="706" y="810" fill="#000" text-anchor="start" font-size="7px" font-weight="bold" >C3</text>
<text x="730" y="810" fill="#000" text-anchor="start" font-size="7px" font-weight="bold" >L3</text>
<text x="680" y="827" fill="#000" text-anchor="start" font-size="7px" font-weight="bold" >500pF</text>
<text x="730" y="823" fill="#000" text-anchor="start" font-size="7px" font-weight="bold" >243µH</text>
<text transform="translate(616,741.5) rotate(-90)" font-size="7px" font-weight="bold" fill="#000">MP1</text>
<text transform="translate(616,771) rotate(-90)" font-size="7px" font-weight="bold" fill="#000">MP2</text></g>
</g>
<!-- title bar 1 icon -->
<g shape-rendering="crispEdges">
<rect x="1" y="1" width="16" height="16" fill="#c8c8c8"/>
<polyline points="1.5,5.5 5.5,2.5 9.5,5.5 13.5,2.5 16.5,5.5" fill="none" stroke="#0000ff" stroke-width="1.2"/>
<rect x="3" y="8" width="3" height="1" fill="#ff0000"/><rect x="8" y="9" width="1" height="1" fill="#ff0000"/><rect x="12" y="10" width="2" height="1" fill="#ff0000"/>
<rect x="1" y="5" width="1" height="1" fill="#000"/><rect x="1" y="10" width="1" height="1" fill="#000"/>
<rect x="6" y="13" width="1" height="1" fill="#000080"/><rect x="12" y="13" width="1" height="1" fill="#000080"/>
<rect x="1" y="15" width="16" height="1" fill="#000"/><rect x="4" y="16" width="1" height="1" fill="#000"/><rect x="9" y="16" width="1" height="1" fill="#000"/><rect x="14" y="16" width="1" height="1" fill="#000"/>
</g>
<!-- title bar 2 icon (transistor) -->
<g fill="#0000ff" shape-rendering="crispEdges">
<rect x="3" y="677" width="4" height="1"/>
<rect x="6" y="673" width="2" height="9"/>
</g>
<g stroke="#0000ff" stroke-width="1.2" fill="none">
<line x1="8" y1="675" x2="13" y2="670"/>
<line x1="8" y1="680" x2="14" y2="686"/>
</g>
<polygon points="14,686 10,685 13,682" fill="#0000ff"/>
<!-- buttons title bar 1 -->
<g>
<rect x="1080.5" y="1.5" width="30" height="16" rx="2.5" fill="url(#gb1)" stroke="#7d8cae"/>
<rect x="1113.5" y="1.5" width="30" height="16" rx="2.5" fill="url(#gb1)" stroke="#7d8cae"/>
<rect x="1146.5" y="1.5" width="30" height="16" rx="2.5" fill="url(#gb1)" stroke="#7d8cae"/>
<rect x="1090.5" y="9.5" width="11" height="3.5" rx="1" fill="#f0f0f0" stroke="#4a5064"/>
<rect x="1123.5" y="5.5" width="10" height="8" rx="1" fill="#f0f0f0" stroke="#4a5064"/>
<rect x="1126" y="8" width="5" height="3" fill="#7a8aa8"/>
<rect x="1126.5" y="8.5" width="4" height="2" fill="#c8d4e4"/>
<path d="M1158,6.8 L1165.5,12.2 M1165.5,6.8 L1158,12.2" stroke="#4a5064" stroke-width="4" stroke-linecap="round"/>
<path d="M1158,6.8 L1165.5,12.2 M1165.5,6.8 L1158,12.2" stroke="#f4f4f4" stroke-width="2" stroke-linecap="round"/>
</g>
<!-- buttons title bar 2 -->
<g>
<rect x="1077.5" y="670.5" width="30" height="16" rx="2.5" fill="url(#gb2)" stroke="#4a5a78"/>
<rect x="1110.5" y="670.5" width="30" height="16" rx="2.5" fill="url(#gb2)" stroke="#4a5a78"/>
<rect x="1143.5" y="670.5" width="30" height="16" rx="2.5" fill="url(#gb3)" stroke="#501020"/>
<rect x="1087.5" y="678.5" width="10" height="4" rx="1" fill="#f0f0f0" stroke="#3c3c50"/>
<rect x="1120.5" y="674.5" width="10" height="8" rx="1" fill="#f0f0f0" stroke="#3c3c50"/>
<rect x="1123" y="677" width="5" height="3" fill="#98b4d4"/>
<path d="M1154,675.5 L1163,682 M1163,675.5 L1154,682" stroke="#3c3c50" stroke-width="3.4" stroke-linecap="round"/>
<path d="M1154,675.5 L1163,682 M1163,675.5 L1154,682" stroke="#ffffff" stroke-width="1.8" stroke-linecap="round"/>
</g>
<defs>
<linearGradient id="gb1" x1="0" y1="0" x2="0" y2="1"><stop offset="0" stop-color="#dce6f2"/><stop offset="0.5" stop-color="#d2dfee"/><stop offset="0.5" stop-color="#c6d6ea"/><stop offset="1" stop-color="#d4e2f2"/></linearGradient>
<linearGradient id="gb2" x1="0" y1="0" x2="0" y2="1"><stop offset="0" stop-color="#c4d8ee"/><stop offset="0.5" stop-color="#b6cce6"/><stop offset="0.5" stop-color="#9cb8d8"/><stop offset="1" stop-color="#b8d0ea"/></linearGradient>
<linearGradient id="gb3" x1="0" y1="0" x2="0" y2="1"><stop offset="0" stop-color="#e8a090"/><stop offset="0.5" stop-color="#d88070"/><stop offset="0.5" stop-color="#c04828"/><stop offset="1" stop-color="#d87a60"/></linearGradient>
</defs>
</svg>
</body></html>
